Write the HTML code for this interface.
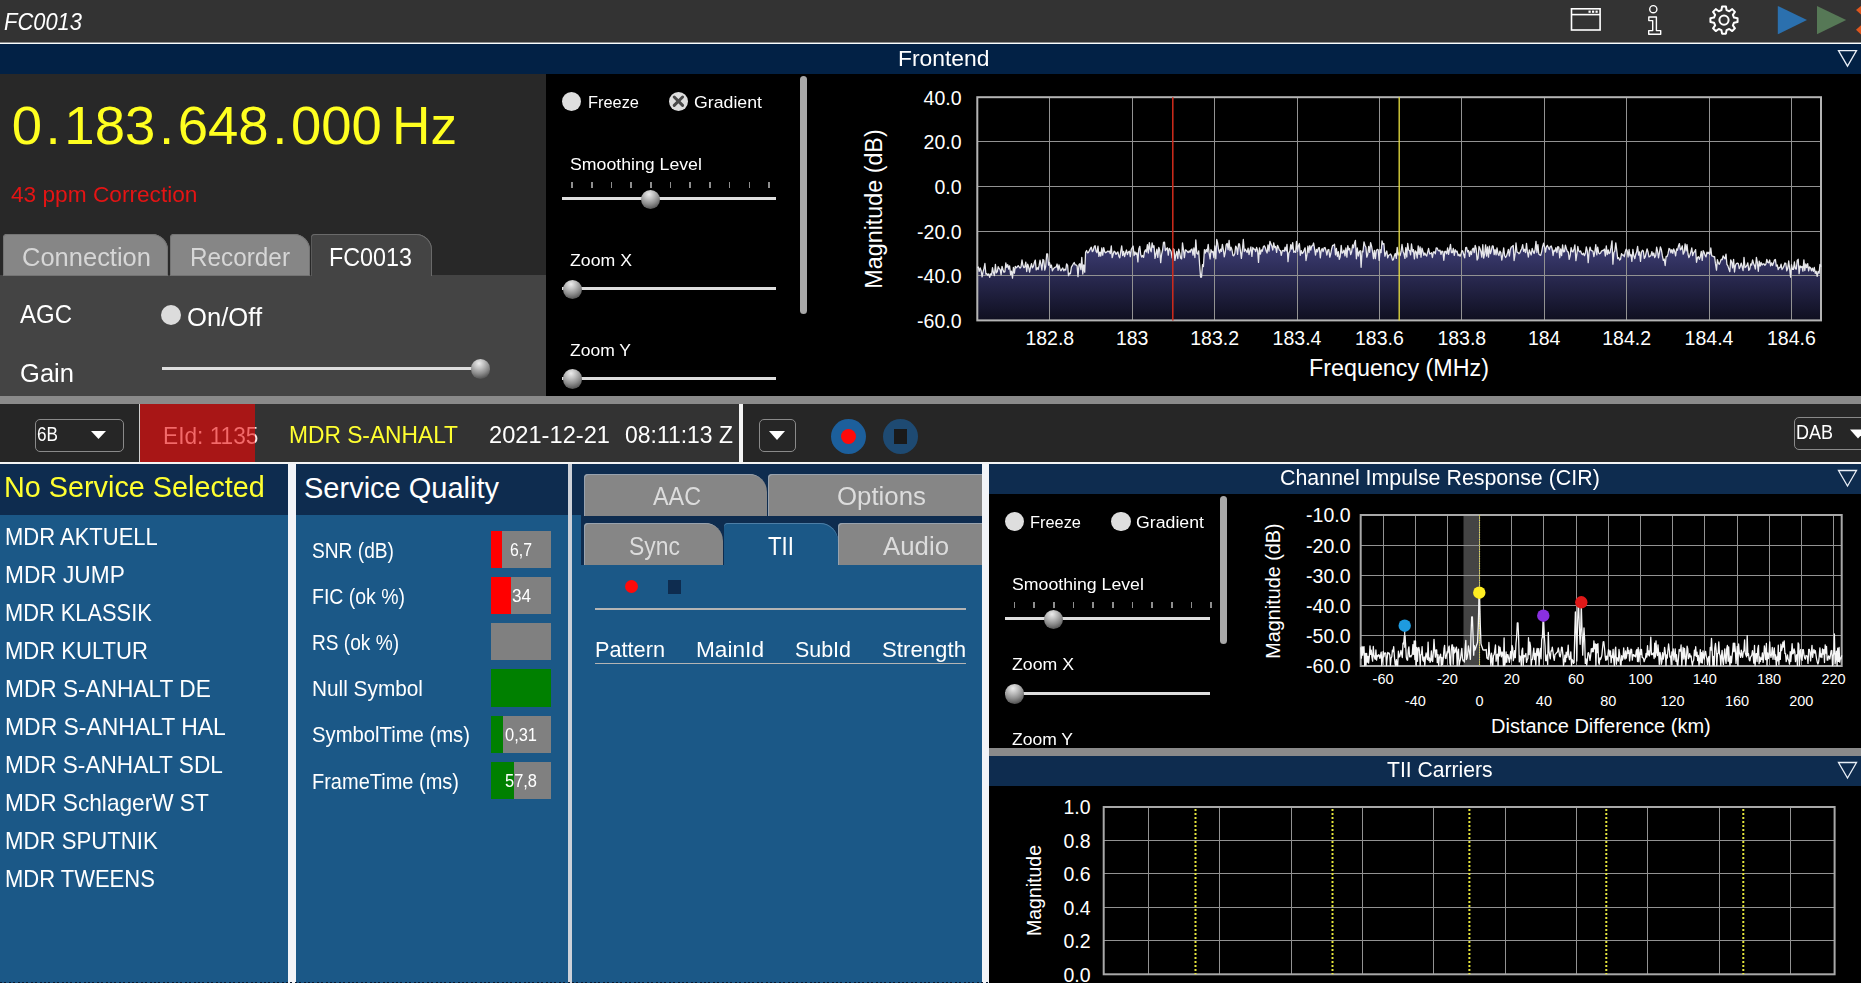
<!DOCTYPE html>
<html lang="en"><head><meta charset="utf-8"><title>FC0013</title>
<style>
html,body{margin:0;padding:0;background:#000;}
body{width:1861px;height:983px;position:relative;overflow:hidden;font-family:"Liberation Sans",sans-serif;}
.b{position:absolute;}
.t{position:absolute;white-space:nowrap;line-height:1;transform-origin:0 50%;}
.t i{font-style:normal;margin:0 3.6px;}
svg{position:absolute;left:0;top:0;overflow:visible;}
svg text{font-family:"Liberation Sans",sans-serif;fill:#fff;}
</style></head><body>
<div class="b" style="left:0px;top:0px;width:1861px;height:42px;background:#333333;"></div>
<div class="b" style="left:0px;top:42px;width:1861px;height:1px;background:#8e8e8e;"></div>
<div class="b" style="left:0px;top:43px;width:1861px;height:1px;background:#fafefe;"></div>
<span class="t" style="left:4.00px;top:11.13px;font-size:23px;color:#fff;transform:scaleX(0.9532);font-style:italic;">FC0013</span>
<svg width="1861" height="44" viewBox="0 0 1861 44" fill="none" stroke="#fff" stroke-width="1.6">
<rect x="1571.5" y="8.8" width="28.6" height="21.2"/>
<line x1="1571.5" y1="14.6" x2="1600" y2="14.6"/>
<g fill="#fff" stroke="none"><rect x="1588.5" y="10.6" width="2.2" height="2.2"/><rect x="1592" y="10.6" width="2.2" height="2.2"/><rect x="1595.5" y="10.6" width="2.2" height="2.2"/></g>
<circle cx="1653.3" cy="9.2" r="3.6" stroke-width="1.4"/>
<path d="M1648.8 17 h7.6 v13.6 h4.3 v3.6 h-12 v-3.6 h4.0 v-10 h-3.9 z" stroke-width="1.4" stroke-linejoin="round"/>
<g transform="translate(1724 20.1)">
<path id="gear" stroke-width="2" stroke-linejoin="round" d="M-2.56 -9.98 L-1.93 -13.56 L1.93 -13.56 L2.56 -9.98 L5.24 -8.87 L8.23 -10.96 L10.96 -8.23 L8.87 -5.24 L9.98 -2.56 L13.56 -1.93 L13.56 1.93 L9.98 2.56 L8.87 5.24 L10.96 8.23 L8.23 10.96 L5.24 8.87 L2.56 9.98 L1.93 13.56 L-1.93 13.56 L-2.56 9.98 L-5.24 8.87 L-8.23 10.96 L-10.96 8.23 L-8.87 5.24 L-9.98 2.56 L-13.56 1.93 L-13.56 -1.93 L-9.98 -2.56 L-8.87 -5.24 L-10.96 -8.23 L-8.23 -10.96 L-5.24 -8.87 Z"/>
<circle r="4.6" stroke-width="2"/>
</g>
<polygon points="1777.8,5.9 1807,20 1777.8,34.3" fill="#2b70ae" stroke="none"/>
<polygon points="1817,5.9 1846.2,20 1817,34.3" fill="#567856" stroke="none"/>
<polygon points="1856,10 1861,5.9 1861,14.6" fill="#de561e" stroke="none"/>
<polygon points="1856,29.8 1861,25.3 1861,34.4" fill="#de561e" stroke="none"/>
</svg>
<div class="b" style="left:0px;top:44px;width:1861px;height:30px;background:#022145;"></div>
<span class="t" style="left:897.75px;top:47.72px;font-size:22.3px;color:#fff;transform:scaleX(1.0251);">Frontend</span>
<svg width="1861" height="983"><polygon points="1838.5,50.6 1856.5,50.6 1847.5,66.1" fill="none" stroke="#e8eef6" stroke-width="1.3"/></svg>
<div class="b" style="left:0px;top:74px;width:546px;height:201px;background:#282828;"></div>
<div class="b" style="left:0px;top:275px;width:546px;height:121px;background:#444444;"></div>
<span class="t" style="left:11.70px;top:98.57px;font-size:54.5px;color:#ffff20;">0<i>.</i>183<i>.</i>648<i>.</i>000</span>
<span class="t" style="left:391.60px;top:99.41px;font-size:53.5px;color:#ffff20;transform:scaleX(0.9941);">Hz</span>
<span class="t" style="left:10.80px;top:184.67px;font-size:21.3px;color:#e41414;transform:scaleX(1.0644);">43 ppm Correction</span>
<div class="b" style="left:3px;top:234px;width:165px;height:41.5px;background:#868686;border-radius:4px 16px 0 0;box-shadow:inset 0 0 0 1px #747474;"></div>
<div class="b" style="left:170px;top:234px;width:140px;height:41.5px;background:#868686;border-radius:4px 16px 0 0;box-shadow:inset 0 0 0 1px #747474;"></div>
<div class="b" style="left:310.5px;top:234px;width:121px;height:42px;background:#444444;border-radius:4px 16px 0 0;box-shadow:inset 0 1px 0 #6a6a6a, inset -1px 0 0 #6a6a6a, inset 1px 0 0 #5a5a5a;"></div>
<span class="t" style="left:22.00px;top:245.28px;font-size:25.3px;color:#d6d6d6;transform:scaleX(1.0078);">Connection</span>
<span class="t" style="left:190.00px;top:245.28px;font-size:25.3px;color:#d6d6d6;transform:scaleX(0.9610);">Recorder</span>
<span class="t" style="left:329.00px;top:245.28px;font-size:25.3px;color:#fff;transform:scaleX(0.9221);">FC0013</span>
<span class="t" style="left:20.00px;top:301.14px;font-size:26.3px;color:#fff;transform:scaleX(0.9124);">AGC</span>
<div class="b" style="left:161px;top:305.3px;width:20px;height:20px;background:#dcdcdc;border-radius:50%;"></div>
<span class="t" style="left:186.50px;top:303.79px;font-size:26px;color:#fff;transform:scaleX(0.9855);">On/Off</span>
<span class="t" style="left:20.00px;top:359.84px;font-size:26.3px;color:#fff;transform:scaleX(0.9720);">Gain</span>
<div class="b" style="left:161.5px;top:366.8px;width:311.5px;height:3px;background:#dedede;"></div><div class="b" style="left:470.6px;top:359.3px;width:19.4px;height:19.4px;background:#999;border-radius:50%;background:radial-gradient(circle at 42% 22%,#ececec 0%,#bdbdbd 28%,#8c8c8c 55%,#555 80%,#3a3a3a 100%);"></div>
<div class="b" style="left:562.0px;top:91.60000000000001px;width:19.2px;height:19.2px;background:#dedede;border-radius:50%;"></div>
<span class="t" style="left:587.50px;top:94.34px;font-size:17.2px;color:#fff;transform:scaleX(0.9527);">Freeze</span>
<div class="b" style="left:668.8px;top:91.60000000000001px;width:19.2px;height:19.2px;background:#dedede;border-radius:50%;"></div><svg width="1861" height="983"><g stroke="#4a4a4a" stroke-width="3" stroke-linecap="round"><line x1="674.1999999999999" y1="97.0" x2="682.6" y2="105.4"/><line x1="682.6" y1="97.0" x2="674.1999999999999" y2="105.4"/></g></svg>
<span class="t" style="left:694.00px;top:94.34px;font-size:17.2px;color:#fff;transform:scaleX(1.0307);">Gradient</span>
<span class="t" style="left:569.50px;top:156.34px;font-size:17.2px;color:#fff;transform:scaleX(1.0302);">Smoothing Level</span>
<div class="b" style="left:571.2px;top:182px;width:1.7px;height:5.599999999999994px;background:#8e8e8e;"></div><div class="b" style="left:590.9px;top:182px;width:1.7px;height:5.599999999999994px;background:#8e8e8e;"></div><div class="b" style="left:610.6px;top:182px;width:1.7px;height:5.599999999999994px;background:#8e8e8e;"></div><div class="b" style="left:630.3px;top:182px;width:1.7px;height:5.599999999999994px;background:#8e8e8e;"></div><div class="b" style="left:650.0px;top:182px;width:1.7px;height:5.599999999999994px;background:#8e8e8e;"></div><div class="b" style="left:669.7px;top:182px;width:1.7px;height:5.599999999999994px;background:#8e8e8e;"></div><div class="b" style="left:689.4px;top:182px;width:1.7px;height:5.599999999999994px;background:#8e8e8e;"></div><div class="b" style="left:709.1px;top:182px;width:1.7px;height:5.599999999999994px;background:#8e8e8e;"></div><div class="b" style="left:728.8px;top:182px;width:1.7px;height:5.599999999999994px;background:#8e8e8e;"></div><div class="b" style="left:748.5px;top:182px;width:1.7px;height:5.599999999999994px;background:#8e8e8e;"></div><div class="b" style="left:768.2px;top:182px;width:1.7px;height:5.599999999999994px;background:#8e8e8e;"></div>
<div class="b" style="left:562px;top:197.1px;width:213.5px;height:3px;background:#dedede;"></div><div class="b" style="left:640.9px;top:189.6px;width:19.4px;height:19.4px;background:#999;border-radius:50%;background:radial-gradient(circle at 42% 22%,#ececec 0%,#bdbdbd 28%,#8c8c8c 55%,#555 80%,#3a3a3a 100%);"></div>
<span class="t" style="left:569.50px;top:252.24px;font-size:17.2px;color:#fff;transform:scaleX(1.0296);">Zoom X</span>
<div class="b" style="left:562px;top:287.1px;width:213.5px;height:3px;background:#dedede;"></div><div class="b" style="left:562.5px;top:279.6px;width:19.4px;height:19.4px;background:#999;border-radius:50%;background:radial-gradient(circle at 42% 22%,#ececec 0%,#bdbdbd 28%,#8c8c8c 55%,#555 80%,#3a3a3a 100%);"></div>
<span class="t" style="left:569.50px;top:342.24px;font-size:17.2px;color:#fff;transform:scaleX(1.0182);">Zoom Y</span>
<div class="b" style="left:562px;top:376.7px;width:213.5px;height:3px;background:#dedede;"></div><div class="b" style="left:562.5px;top:369.2px;width:19.4px;height:19.4px;background:#999;border-radius:50%;background:radial-gradient(circle at 42% 22%,#ececec 0%,#bdbdbd 28%,#8c8c8c 55%,#555 80%,#3a3a3a 100%);"></div>
<div class="b" style="left:800px;top:75.5px;width:7px;height:238px;background:#a8a8a8;border-radius:3.5px;"></div>
<div class="b" style="left:0px;top:396px;width:1861px;height:8px;background:#8a8a8a;"></div>
<div class="b" style="left:0px;top:404px;width:139px;height:58px;background:#262626;"></div>
<div class="b" style="left:139px;top:404px;width:1.2px;height:58px;background:#d0d0d0;"></div>
<div class="b" style="left:140px;top:404px;width:115px;height:58px;background:#a81616;"></div>
<div class="b" style="left:255px;top:404px;width:484px;height:58px;background:#333333;"></div>
<div class="b" style="left:738.5px;top:404px;width:4.5px;height:60px;background:#f4f4f4;"></div>
<div class="b" style="left:743px;top:404px;width:1118px;height:58px;background:#262626;"></div>
<div class="b" style="left:0px;top:462px;width:1861px;height:2px;background:#f4f4f4;"></div>
<div class="b" style="left:34.5px;top:419px;width:89px;height:33px;background:#262626;border:1.3px solid #8a8a8a;border-radius:5px;box-sizing:border-box;"></div>
<span class="t" style="left:37.00px;top:425.46px;font-size:19.3px;color:#fff;transform:scaleX(0.8895);">6B</span>
<svg width="1861" height="983"><polygon points="91,431 106,431 98.5,439" fill="#fff"/></svg>
<span class="t" style="left:163.30px;top:424.28px;font-size:24px;color:transparent;transform:scaleX(0.9458);background:linear-gradient(90deg,#f36a6a 0,#f36a6a 97.0px,#fbe4e4 97.0px);-webkit-background-clip:text;background-clip:text;">EId: 1135</span>
<span class="t" style="left:289.00px;top:423.08px;font-size:24px;color:#ffff30;transform:scaleX(0.9482);">MDR S-ANHALT</span>
<span class="t" style="left:488.50px;top:423.08px;font-size:24px;color:#fff;transform:scaleX(0.9856);">2021-12-21</span>
<span class="t" style="left:624.50px;top:423.08px;font-size:24px;color:#fff;transform:scaleX(0.9560);">08:11:13 Z</span>
<div class="b" style="left:758.5px;top:419px;width:37.5px;height:33px;background:#262626;border:1.3px solid #8a8a8a;border-radius:5px;box-sizing:border-box;"></div>
<svg width="1861" height="983"><polygon points="769,431 785,431 777.0,440" fill="#fff"/></svg>
<div class="b" style="left:830.5px;top:418.5px;width:35px;height:35px;background:#1c5f9c;border-radius:50%;"></div>
<div class="b" style="left:840.5px;top:428.5px;width:15px;height:15px;background:#ff0a0a;border-radius:50%;"></div>
<div class="b" style="left:882.5px;top:418.5px;width:35px;height:35px;background:#1e4a72;border-radius:50%;"></div>
<div class="b" style="left:894px;top:428.5px;width:12.5px;height:15px;background:#1a1a1a;"></div>
<div class="b" style="left:1793.5px;top:417px;width:80px;height:32.5px;background:#262626;border:1.3px solid #8a8a8a;border-radius:5px;box-sizing:border-box;"></div>
<span class="t" style="left:1796.00px;top:423.36px;font-size:19.3px;color:#fff;transform:scaleX(0.9323);">DAB</span>
<svg width="1861" height="983"><polygon points="1850,429.5 1866,429.5 1858.0,438.5" fill="#fff"/></svg>
<div class="b" style="left:0px;top:464px;width:288px;height:51px;background:#0e2c4f;"></div>
<div class="b" style="left:0px;top:515px;width:288px;height:468px;background:#1b5887;"></div>
<div class="b" style="left:288px;top:464px;width:8px;height:519px;background:#f2f4f8;"></div>
<span class="t" style="left:4.00px;top:472.78px;font-size:29.2px;color:#ffff30;transform:scaleX(0.9865);">No Service Selected</span>
<span class="t" style="left:4.60px;top:524.88px;font-size:24px;color:#fff;transform:scaleX(0.9165);">MDR AKTUELL</span>
<span class="t" style="left:4.60px;top:562.88px;font-size:24px;color:#fff;transform:scaleX(0.9458);">MDR JUMP</span>
<span class="t" style="left:4.60px;top:600.88px;font-size:24px;color:#fff;transform:scaleX(0.9096);">MDR KLASSIK</span>
<span class="t" style="left:4.60px;top:638.88px;font-size:24px;color:#fff;transform:scaleX(0.9180);">MDR KULTUR</span>
<span class="t" style="left:4.60px;top:676.88px;font-size:24px;color:#fff;transform:scaleX(0.9448);">MDR S-ANHALT DE</span>
<span class="t" style="left:4.60px;top:714.88px;font-size:24px;color:#fff;transform:scaleX(0.9552);">MDR S-ANHALT HAL</span>
<span class="t" style="left:4.60px;top:752.88px;font-size:24px;color:#fff;transform:scaleX(0.9422);">MDR S-ANHALT SDL</span>
<span class="t" style="left:4.60px;top:790.88px;font-size:24px;color:#fff;transform:scaleX(0.9433);">MDR SchlagerW ST</span>
<span class="t" style="left:4.60px;top:828.88px;font-size:24px;color:#fff;transform:scaleX(0.9241);">MDR SPUTNIK</span>
<span class="t" style="left:4.60px;top:866.88px;font-size:24px;color:#fff;transform:scaleX(0.9159);">MDR TWEENS</span>
<div class="b" style="left:296px;top:464px;width:272px;height:51px;background:#0e2c4f;"></div>
<div class="b" style="left:296px;top:515px;width:272px;height:468px;background:#1b5887;"></div>
<div class="b" style="left:568px;top:464px;width:4px;height:519px;background:#cdd1d8;"></div>
<span class="t" style="left:304.00px;top:474.25px;font-size:29px;color:#fff;">Service Quality</span>
<span class="t" style="left:311.50px;top:540.57px;font-size:21.3px;color:#fff;transform:scaleX(0.8998);">SNR (dB)</span>
<div class="b" style="left:491px;top:530.7px;width:60px;height:37.4px;background:#808080;"></div>
<div class="b" style="left:491px;top:530.7px;width:11px;height:37.4px;background:#ff0000;"></div>
<span class="t" style="left:510.00px;top:540.96px;font-size:18px;color:#fff;transform:scaleX(0.8792);">6,7</span>
<span class="t" style="left:311.50px;top:586.77px;font-size:21.3px;color:#fff;transform:scaleX(0.9138);">FIC (ok %)</span>
<div class="b" style="left:491px;top:576.9px;width:60px;height:37.4px;background:#808080;"></div>
<div class="b" style="left:491px;top:576.9px;width:20px;height:37.4px;background:#ff0000;"></div>
<span class="t" style="left:511.50px;top:587.16px;font-size:18px;color:#fff;transform:scaleX(0.9489);">34</span>
<span class="t" style="left:311.50px;top:632.97px;font-size:21.3px;color:#fff;transform:scaleX(0.8965);">RS (ok %)</span>
<div class="b" style="left:491px;top:623.1px;width:60px;height:37.4px;background:#808080;"></div>
<span class="t" style="left:311.50px;top:679.17px;font-size:21.3px;color:#fff;transform:scaleX(0.9768);">Null Symbol</span>
<div class="b" style="left:491px;top:669.3px;width:60px;height:37.4px;background:#808080;"></div>
<div class="b" style="left:491px;top:669.3px;width:60px;height:37.4px;background:#008000;"></div>
<span class="t" style="left:311.50px;top:725.37px;font-size:21.3px;color:#fff;transform:scaleX(0.9514);">SymbolTime (ms)</span>
<div class="b" style="left:491px;top:715.5px;width:60px;height:37.4px;background:#808080;"></div>
<div class="b" style="left:491px;top:715.5px;width:12px;height:37.4px;background:#008000;"></div>
<span class="t" style="left:505.00px;top:725.76px;font-size:18px;color:#fff;transform:scaleX(0.9134);">0,31</span>
<span class="t" style="left:311.50px;top:771.57px;font-size:21.3px;color:#fff;transform:scaleX(0.9388);">FrameTime (ms)</span>
<div class="b" style="left:491px;top:761.7px;width:60px;height:37.4px;background:#808080;"></div>
<div class="b" style="left:491px;top:761.7px;width:23px;height:37.4px;background:#008000;"></div>
<span class="t" style="left:505.00px;top:771.96px;font-size:18px;color:#fff;transform:scaleX(0.9134);">57,8</span>
<div class="b" style="left:572px;top:464px;width:410px;height:51px;background:#0e2c4f;"></div>
<div class="b" style="left:581px;top:515px;width:401px;height:50px;background:#0e2c4f;"></div>
<div class="b" style="left:572px;top:515px;width:9px;height:50px;background:#1b5887;"></div>
<div class="b" style="left:572px;top:565px;width:410px;height:418px;background:#1b5887;"></div>
<div class="b" style="left:982px;top:464px;width:7px;height:519px;background:#f2f4f8;"></div>
<div class="b" style="left:584px;top:474px;width:182.5px;height:41.5px;background:#868686;border-radius:4px 18px 0 0;box-shadow:inset 1px 1px 0 #98a2ae;"></div>
<div class="b" style="left:768px;top:474px;width:214px;height:41.5px;background:#868686;border-radius:4px 0px 0 0;box-shadow:inset 1px 1px 0 #98a2ae;"></div>
<div class="b" style="left:584px;top:523px;width:139px;height:42px;background:#868686;border-radius:4px 18px 0 0;box-shadow:inset 1px 1px 0 #98a2ae;"></div>
<div class="b" style="left:723.5px;top:523px;width:114px;height:42px;background:#1b5887;border-radius:4px 18px 0 0;box-shadow:inset 0 1px 0 #4d7ea6;"></div>
<div class="b" style="left:838px;top:523px;width:144px;height:42px;background:#868686;border-radius:4px 0px 0 0;box-shadow:inset 1px 1px 0 #98a2ae;"></div>
<span class="t" style="left:652.50px;top:484.08px;font-size:25.3px;color:#dcdcdc;transform:scaleX(0.9227);">AAC</span>
<span class="t" style="left:836.50px;top:484.08px;font-size:25.3px;color:#dcdcdc;transform:scaleX(1.0207);">Options</span>
<span class="t" style="left:628.50px;top:534.28px;font-size:25.3px;color:#dcdcdc;transform:scaleX(0.9067);">Sync</span>
<span class="t" style="left:768.00px;top:534.28px;font-size:25.3px;color:#fff;transform:scaleX(0.8810);">TII</span>
<span class="t" style="left:883.30px;top:534.28px;font-size:25.3px;color:#dcdcdc;transform:scaleX(1.0199);">Audio</span>
<div class="b" style="left:625px;top:580px;width:13.2px;height:13.2px;background:#ff0a0a;border-radius:50%;"></div>
<div class="b" style="left:668px;top:579.5px;width:13px;height:14px;background:#0e2c4f;"></div>
<div class="b" style="left:595px;top:608.3px;width:371px;height:1.5px;background:#b4b4b4;"></div>
<span class="t" style="left:595.00px;top:639.02px;font-size:22.3px;color:#fff;transform:scaleX(0.9736);">Pattern</span>
<span class="t" style="left:696.30px;top:639.02px;font-size:22.3px;color:#fff;transform:scaleX(1.0159);">MainId</span>
<span class="t" style="left:795.00px;top:639.02px;font-size:22.3px;color:#fff;transform:scaleX(0.9609);">SubId</span>
<span class="t" style="left:882.00px;top:639.02px;font-size:22.3px;color:#fff;transform:scaleX(0.9964);">Strength</span>
<div class="b" style="left:595px;top:662.6px;width:371px;height:1.4px;background:#b4b4b4;"></div>
<div class="b" style="left:989px;top:464px;width:872px;height:30px;background:#0e2c4f;"></div>
<span class="t" style="left:1280.00px;top:467.42px;font-size:22.3px;color:#fff;transform:scaleX(0.9592);">Channel Impulse Response (CIR)</span>
<svg width="1861" height="983"><polygon points="1838.5,470.5 1856.5,470.5 1847.5,486.0" fill="none" stroke="#e8eef6" stroke-width="1.3"/></svg>
<div class="b" style="left:989px;top:748px;width:872px;height:8px;background:#8a8a8a;"></div>
<div class="b" style="left:989px;top:756px;width:872px;height:30px;background:#0e2c4f;"></div>
<span class="t" style="left:1387.30px;top:759.42px;font-size:22.3px;color:#fff;transform:scaleX(0.9471);">TII Carriers</span>
<svg width="1861" height="983"><polygon points="1838.5,762.5 1856.5,762.5 1847.5,778.0" fill="none" stroke="#e8eef6" stroke-width="1.3"/></svg>
<div class="b" style="left:1004.9px;top:511.9px;width:19.2px;height:19.2px;background:#dedede;border-radius:50%;"></div>
<span class="t" style="left:1029.80px;top:514.14px;font-size:17.2px;color:#fff;transform:scaleX(0.9527);">Freeze</span>
<div class="b" style="left:1111.4px;top:511.9px;width:19.2px;height:19.2px;background:#dedede;border-radius:50%;"></div>
<span class="t" style="left:1136.30px;top:514.14px;font-size:17.2px;color:#fff;transform:scaleX(1.0307);">Gradient</span>
<span class="t" style="left:1011.70px;top:576.14px;font-size:17.2px;color:#fff;transform:scaleX(1.0302);">Smoothing Level</span>
<div class="b" style="left:1013.7px;top:602px;width:1.7px;height:5.7000000000000455px;background:#8e8e8e;"></div><div class="b" style="left:1033.4px;top:602px;width:1.7px;height:5.7000000000000455px;background:#8e8e8e;"></div><div class="b" style="left:1053.0px;top:602px;width:1.7px;height:5.7000000000000455px;background:#8e8e8e;"></div><div class="b" style="left:1072.7px;top:602px;width:1.7px;height:5.7000000000000455px;background:#8e8e8e;"></div><div class="b" style="left:1092.4px;top:602px;width:1.7px;height:5.7000000000000455px;background:#8e8e8e;"></div><div class="b" style="left:1112.0px;top:602px;width:1.7px;height:5.7000000000000455px;background:#8e8e8e;"></div><div class="b" style="left:1131.7px;top:602px;width:1.7px;height:5.7000000000000455px;background:#8e8e8e;"></div><div class="b" style="left:1151.4px;top:602px;width:1.7px;height:5.7000000000000455px;background:#8e8e8e;"></div><div class="b" style="left:1171.1px;top:602px;width:1.7px;height:5.7000000000000455px;background:#8e8e8e;"></div><div class="b" style="left:1190.7px;top:602px;width:1.7px;height:5.7000000000000455px;background:#8e8e8e;"></div><div class="b" style="left:1210.4px;top:602px;width:1.7px;height:5.7000000000000455px;background:#8e8e8e;"></div>
<div class="b" style="left:1004.6px;top:617.1px;width:205.89999999999998px;height:3px;background:#dedede;"></div><div class="b" style="left:1043.7px;top:609.6px;width:19.4px;height:19.4px;background:#999;border-radius:50%;background:radial-gradient(circle at 42% 22%,#ececec 0%,#bdbdbd 28%,#8c8c8c 55%,#555 80%,#3a3a3a 100%);"></div>
<span class="t" style="left:1011.70px;top:655.94px;font-size:17.2px;color:#fff;transform:scaleX(1.0296);">Zoom X</span>
<div class="b" style="left:1004.6px;top:691.9px;width:205.89999999999998px;height:3px;background:#dedede;"></div><div class="b" style="left:1004.5999999999999px;top:684.4px;width:19.4px;height:19.4px;background:#999;border-radius:50%;background:radial-gradient(circle at 42% 22%,#ececec 0%,#bdbdbd 28%,#8c8c8c 55%,#555 80%,#3a3a3a 100%);"></div>
<div class="b" style="left:989px;top:494px;width:300px;height:254px;overflow:hidden;"><span class="t" style="left:22.70px;top:236.94px;font-size:17.2px;color:#fff;transform:scaleX(1.0182);">Zoom Y</span></div>
<div class="b" style="left:1220px;top:495.5px;width:7px;height:148.5px;background:#a8a8a8;border-radius:3.5px;"></div>
<div class="b" style="left:0px;top:982px;width:989px;height:1px;background:transparent;background:repeating-linear-gradient(90deg,#0a1a30 0 2px,transparent 2px 4.4px);"></div>
<svg width="1861" height="983" viewBox="0 0 1861 983">
<defs><linearGradient id="fg" x1="0" y1="0" x2="0" y2="1"><stop offset="0" stop-color="#40407a"/><stop offset="1" stop-color="#0f0f20"/></linearGradient></defs>
<polygon points="977.3,320.4 977.3,267.7 978.3,267.0 979.2,271.3 980.2,267.9 981.1,270.5 982.1,276.9 983.0,272.2 984.0,268.3 984.9,263.5 985.9,274.2 986.8,273.7 987.8,275.3 988.7,273.9 989.7,277.4 990.6,273.8 991.6,274.8 992.5,267.7 993.5,272.9 994.4,275.6 995.4,264.3 996.3,272.9 997.3,271.6 998.2,266.7 999.2,268.6 1000.1,269.4 1001.1,274.7 1002.0,266.3 1003.0,269.8 1003.9,272.2 1004.9,271.8 1005.8,263.0 1006.8,267.4 1007.7,264.6 1008.7,269.0 1009.6,265.8 1010.6,274.7 1011.5,271.2 1012.5,278.1 1013.4,267.3 1014.4,273.2 1015.3,266.3 1016.3,267.8 1017.2,267.0 1018.2,265.6 1019.1,266.8 1020.1,268.1 1021.0,266.8 1022.0,260.0 1022.9,265.3 1023.9,267.7 1024.8,267.0 1025.8,262.1 1026.7,271.5 1027.7,264.1 1028.6,266.8 1029.6,272.2 1030.5,267.3 1031.5,263.7 1032.4,267.8 1033.4,266.3 1034.3,262.8 1035.3,260.1 1036.2,269.9 1037.2,267.7 1038.1,269.5 1039.1,265.7 1040.0,260.1 1041.0,264.7 1041.9,270.0 1042.9,259.5 1043.8,260.2 1044.8,270.2 1045.7,266.5 1046.7,253.9 1047.6,253.9 1048.6,265.2 1049.5,262.7 1050.5,267.4 1051.4,265.1 1052.4,270.8 1053.3,269.0 1054.3,267.8 1055.2,267.2 1056.2,267.1 1057.1,264.0 1058.1,270.4 1059.0,265.0 1060.0,269.2 1060.9,270.8 1061.9,269.1 1062.8,267.9 1063.8,270.9 1064.7,269.3 1065.7,270.1 1066.6,263.8 1067.6,265.4 1068.5,275.7 1069.5,273.2 1070.4,273.7 1071.4,267.2 1072.3,265.7 1073.3,263.8 1074.2,262.5 1075.2,264.9 1076.1,264.9 1077.1,265.9 1078.0,276.6 1079.0,264.6 1079.9,263.8 1080.9,269.6 1081.8,257.3 1082.8,274.0 1083.7,265.0 1084.7,272.2 1085.6,252.3 1086.6,250.5 1087.5,252.8 1088.5,252.3 1089.4,250.6 1090.4,248.6 1091.3,247.2 1092.3,251.5 1093.2,250.7 1094.2,246.7 1095.1,245.7 1096.1,251.4 1097.0,252.7 1098.0,246.2 1098.9,256.4 1099.9,252.1 1100.8,256.0 1101.8,247.8 1102.7,255.1 1103.7,247.7 1104.6,251.5 1105.6,252.8 1106.5,252.3 1107.5,251.1 1108.4,251.6 1109.4,251.1 1110.3,253.7 1111.3,245.8 1112.2,257.6 1113.2,254.0 1114.1,251.2 1115.1,252.1 1116.0,254.4 1117.0,252.8 1117.9,252.0 1118.9,256.4 1119.8,257.8 1120.8,251.1 1121.7,245.9 1122.7,255.7 1123.6,251.5 1124.6,256.6 1125.5,253.0 1126.5,250.0 1127.4,254.6 1128.4,252.0 1129.3,251.2 1130.3,256.6 1131.2,249.6 1132.2,247.8 1133.1,246.1 1134.1,255.7 1135.0,252.0 1136.0,254.4 1136.9,252.8 1137.9,261.9 1138.8,249.0 1139.8,246.3 1140.7,254.5 1141.7,257.1 1142.6,255.5 1143.6,257.4 1144.5,251.8 1145.5,249.9 1146.4,252.0 1147.4,244.6 1148.3,253.0 1149.3,242.7 1150.2,249.2 1151.2,251.8 1152.1,242.8 1153.1,247.4 1154.0,245.7 1155.0,258.4 1155.9,254.1 1156.9,249.2 1157.8,257.4 1158.8,247.4 1159.7,250.2 1160.7,262.6 1161.6,254.3 1162.6,250.0 1163.5,242.4 1164.5,242.1 1165.4,250.7 1166.4,249.0 1167.3,247.8 1168.3,255.1 1169.2,248.4 1170.2,249.9 1171.1,251.5 1172.1,257.9 1173.0,248.6 1174.0,249.4 1174.9,260.4 1175.9,255.0 1176.8,251.5 1177.8,258.5 1178.7,249.1 1179.7,252.8 1180.6,258.0 1181.6,258.9 1182.5,242.8 1183.5,250.2 1184.4,257.6 1185.4,249.8 1186.3,250.3 1187.3,251.5 1188.2,252.6 1189.2,250.9 1190.1,252.3 1191.1,249.5 1192.0,249.0 1193.0,255.1 1193.9,248.0 1194.9,257.5 1195.8,239.8 1196.8,253.3 1197.7,254.1 1198.7,250.9 1199.6,264.6 1200.6,277.1 1201.5,277.1 1202.5,264.6 1203.4,266.6 1204.4,249.7 1205.3,253.0 1206.3,249.4 1207.2,251.8 1208.2,244.3 1209.1,252.9 1210.1,258.9 1211.0,249.7 1212.0,252.2 1212.9,251.5 1213.9,257.6 1214.8,245.9 1215.8,258.8 1216.7,239.5 1217.7,243.5 1218.6,250.0 1219.6,252.8 1220.5,249.1 1221.5,251.4 1222.4,244.3 1223.4,250.0 1224.3,256.9 1225.3,252.0 1226.2,244.7 1227.2,243.4 1228.1,249.7 1229.1,240.3 1230.0,250.7 1231.0,247.2 1231.9,249.5 1232.9,255.4 1233.8,255.8 1234.8,253.5 1235.7,246.1 1236.7,247.9 1237.6,254.3 1238.6,243.8 1239.5,244.0 1240.5,251.5 1241.4,258.3 1242.4,249.7 1243.3,239.5 1244.3,251.5 1245.2,249.2 1246.2,250.8 1247.1,252.5 1248.1,248.1 1249.0,254.5 1250.0,250.2 1250.9,247.0 1251.9,256.4 1252.8,247.5 1253.8,249.2 1254.7,249.1 1255.7,251.6 1256.6,247.5 1257.6,250.5 1258.5,262.4 1259.5,247.8 1260.4,254.1 1261.4,249.8 1262.3,251.2 1263.3,247.0 1264.2,245.8 1265.2,247.3 1266.1,250.7 1267.1,253.0 1268.0,244.9 1269.0,251.1 1269.9,241.3 1270.9,244.1 1271.8,246.1 1272.8,250.0 1273.7,242.8 1274.7,247.7 1275.6,246.5 1276.6,252.3 1277.5,245.3 1278.5,247.5 1279.4,250.1 1280.4,250.6 1281.3,255.3 1282.3,250.6 1283.2,250.4 1284.2,251.3 1285.1,247.1 1286.1,250.8 1287.0,244.4 1288.0,261.6 1288.9,253.0 1289.9,251.1 1290.8,244.7 1291.8,249.1 1292.7,242.6 1293.7,252.3 1294.6,251.3 1295.6,252.4 1296.5,241.4 1297.5,251.3 1298.4,245.9 1299.4,243.5 1300.3,255.3 1301.3,250.6 1302.2,253.5 1303.2,252.6 1304.1,250.1 1305.1,247.8 1306.0,260.5 1307.0,254.8 1307.9,246.1 1308.9,252.6 1309.8,245.6 1310.8,250.1 1311.7,246.0 1312.7,245.6 1313.6,243.0 1314.6,248.8 1315.5,255.1 1316.5,249.3 1317.4,251.9 1318.4,248.1 1319.3,247.6 1320.3,257.8 1321.2,250.5 1322.2,248.5 1323.1,251.7 1324.1,247.9 1325.0,247.5 1326.0,250.7 1326.9,255.0 1327.9,249.8 1328.8,249.5 1329.8,257.2 1330.7,254.0 1331.7,248.7 1332.6,245.5 1333.6,245.3 1334.5,244.2 1335.5,254.9 1336.4,248.5 1337.4,256.5 1338.3,251.7 1339.3,259.3 1340.2,256.8 1341.2,245.4 1342.1,253.2 1343.1,252.2 1344.0,250.1 1345.0,255.8 1345.9,248.0 1346.9,257.1 1347.8,245.7 1348.8,249.8 1349.7,248.4 1350.7,254.6 1351.6,252.1 1352.6,244.8 1353.5,247.9 1354.5,243.1 1355.4,240.4 1356.4,258.8 1357.3,248.0 1358.3,256.0 1359.2,252.2 1360.2,250.6 1361.1,267.3 1362.1,251.2 1363.0,251.8 1364.0,241.8 1364.9,245.2 1365.9,247.2 1366.8,257.2 1367.8,254.0 1368.7,246.4 1369.7,252.3 1370.6,242.6 1371.6,246.3 1372.5,251.5 1373.5,258.7 1374.4,250.4 1375.4,258.7 1376.3,250.6 1377.3,249.4 1378.2,249.8 1379.2,260.4 1380.1,249.6 1381.1,252.7 1382.0,241.0 1383.0,244.2 1383.9,243.6 1384.9,256.2 1385.8,253.3 1386.8,251.0 1387.7,257.8 1388.7,255.3 1389.6,254.7 1390.6,254.0 1391.5,255.9 1392.5,260.2 1393.4,259.7 1394.4,255.7 1395.3,253.5 1396.3,258.4 1397.2,247.3 1398.2,255.0 1399.2,252.8 1400.1,255.6 1401.1,251.5 1402.0,244.5 1403.0,251.2 1403.9,253.5 1404.9,258.4 1405.8,247.6 1406.8,257.0 1407.7,243.4 1408.7,250.2 1409.6,250.5 1410.6,254.8 1411.5,244.0 1412.5,251.7 1413.4,249.6 1414.4,258.9 1415.3,250.8 1416.3,252.2 1417.2,258.0 1418.2,245.9 1419.1,254.3 1420.1,246.8 1421.0,257.2 1422.0,248.1 1422.9,251.2 1423.9,255.3 1424.8,252.9 1425.8,255.1 1426.7,256.0 1427.7,251.8 1428.6,248.5 1429.6,253.8 1430.5,253.6 1431.5,252.6 1432.4,257.5 1433.4,252.0 1434.3,251.9 1435.3,253.8 1436.2,247.9 1437.2,248.1 1438.1,250.2 1439.1,250.9 1440.0,250.1 1441.0,254.4 1441.9,251.2 1442.9,251.7 1443.8,260.3 1444.8,251.3 1445.7,251.4 1446.7,253.8 1447.6,247.9 1448.6,254.3 1449.5,249.4 1450.5,244.4 1451.4,252.5 1452.4,252.5 1453.3,248.5 1454.3,255.4 1455.2,249.7 1456.2,251.9 1457.1,251.1 1458.1,255.7 1459.0,254.3 1460.0,256.3 1460.9,254.4 1461.9,250.6 1462.8,251.3 1463.8,254.8 1464.7,257.9 1465.7,247.6 1466.6,247.4 1467.6,251.9 1468.5,250.5 1469.5,256.4 1470.4,251.1 1471.4,254.7 1472.3,249.5 1473.3,248.2 1474.2,252.7 1475.2,245.4 1476.1,248.5 1477.1,260.0 1478.0,258.1 1479.0,246.5 1479.9,248.4 1480.9,251.7 1481.8,257.1 1482.8,244.7 1483.7,258.2 1484.7,253.4 1485.6,244.8 1486.6,256.0 1487.5,247.0 1488.5,257.1 1489.4,246.2 1490.4,253.7 1491.3,250.7 1492.3,245.8 1493.2,246.1 1494.2,254.7 1495.1,249.7 1496.1,254.8 1497.0,247.8 1498.0,253.7 1498.9,255.5 1499.9,251.2 1500.8,252.7 1501.8,260.2 1502.7,255.0 1503.7,247.9 1504.6,255.5 1505.6,257.5 1506.5,256.0 1507.5,252.9 1508.4,249.5 1509.4,256.0 1510.3,249.6 1511.3,246.9 1512.2,246.7 1513.2,245.4 1514.1,260.5 1515.1,253.8 1516.0,243.0 1517.0,252.1 1517.9,252.3 1518.9,253.7 1519.8,252.9 1520.8,250.4 1521.7,248.7 1522.7,244.7 1523.6,251.3 1524.6,249.3 1525.5,252.7 1526.5,243.4 1527.4,251.9 1528.4,257.0 1529.3,250.0 1530.3,252.6 1531.2,255.0 1532.2,248.4 1533.1,251.4 1534.1,253.5 1535.0,250.2 1536.0,241.4 1536.9,252.5 1537.9,244.6 1538.8,254.0 1539.8,254.9 1540.7,255.3 1541.7,251.6 1542.6,246.7 1543.6,243.2 1544.5,246.7 1545.5,252.1 1546.4,246.9 1547.4,245.4 1548.3,247.4 1549.3,249.6 1550.2,246.7 1551.2,245.9 1552.1,248.7 1553.1,255.5 1554.0,250.1 1555.0,251.2 1555.9,247.6 1556.9,252.7 1557.8,246.6 1558.8,247.0 1559.7,257.8 1560.7,249.0 1561.6,255.7 1562.6,244.8 1563.5,251.9 1564.5,251.7 1565.4,245.1 1566.4,248.7 1567.3,251.4 1568.3,252.1 1569.2,259.3 1570.2,255.7 1571.1,247.6 1572.1,251.4 1573.0,251.9 1574.0,249.0 1574.9,244.9 1575.9,260.6 1576.8,254.8 1577.8,246.5 1578.7,250.8 1579.7,251.9 1580.6,250.9 1581.6,253.8 1582.5,254.6 1583.5,253.2 1584.4,255.7 1585.4,253.3 1586.3,246.9 1587.3,250.9 1588.2,262.6 1589.2,251.6 1590.1,247.1 1591.1,250.7 1592.0,250.7 1593.0,251.4 1593.9,256.6 1594.9,251.6 1595.8,244.7 1596.8,254.8 1597.7,247.2 1598.7,253.0 1599.6,253.8 1600.6,253.0 1601.5,251.1 1602.5,250.5 1603.4,250.5 1604.4,249.1 1605.3,256.0 1606.3,245.8 1607.2,254.6 1608.2,250.0 1609.1,253.7 1610.1,252.5 1611.0,247.4 1612.0,240.8 1612.9,264.2 1613.9,252.5 1614.8,251.2 1615.8,242.8 1616.7,249.9 1617.7,258.6 1618.6,257.6 1619.6,260.1 1620.5,259.3 1621.5,253.6 1622.4,255.1 1623.4,255.0 1624.3,256.7 1625.3,251.7 1626.2,249.1 1627.2,250.9 1628.1,257.0 1629.1,249.5 1630.0,255.9 1631.0,254.7 1631.9,261.3 1632.9,249.5 1633.8,255.6 1634.8,258.7 1635.7,254.5 1636.7,251.6 1637.6,246.4 1638.6,255.1 1639.5,251.9 1640.5,261.4 1641.4,252.2 1642.4,250.2 1643.3,250.9 1644.3,258.3 1645.2,257.0 1646.2,252.5 1647.1,248.9 1648.1,252.3 1649.0,256.9 1650.0,256.4 1650.9,255.5 1651.9,251.6 1652.8,255.6 1653.8,253.0 1654.7,257.5 1655.7,255.7 1656.6,247.2 1657.6,251.4 1658.5,257.8 1659.5,252.3 1660.4,246.9 1661.4,249.8 1662.3,255.4 1663.3,260.3 1664.2,259.1 1665.2,265.5 1666.1,256.5 1667.1,256.6 1668.0,253.9 1669.0,248.5 1669.9,249.0 1670.9,252.8 1671.8,249.7 1672.8,253.4 1673.7,248.9 1674.7,251.6 1675.6,255.9 1676.6,249.0 1677.5,250.2 1678.5,245.8 1679.4,243.6 1680.4,249.8 1681.3,249.0 1682.3,245.8 1683.2,254.2 1684.2,252.3 1685.1,243.9 1686.1,250.9 1687.0,244.6 1688.0,254.0 1688.9,257.6 1689.9,255.3 1690.8,252.1 1691.8,248.0 1692.7,255.6 1693.7,252.5 1694.6,251.7 1695.6,249.6 1696.5,262.3 1697.5,257.6 1698.4,256.8 1699.4,259.3 1700.3,256.7 1701.3,251.4 1702.2,260.4 1703.2,250.7 1704.1,252.4 1705.1,255.4 1706.0,256.9 1707.0,252.1 1707.9,253.5 1708.9,252.3 1709.8,254.4 1710.8,248.0 1711.7,255.8 1712.7,256.1 1713.6,256.8 1714.6,256.7 1715.5,263.9 1716.5,270.1 1717.4,259.6 1718.4,263.1 1719.3,264.3 1720.3,261.8 1721.2,259.3 1722.2,259.7 1723.1,255.8 1724.1,257.8 1725.0,258.8 1726.0,254.1 1726.9,264.4 1727.9,265.9 1728.8,268.9 1729.8,271.7 1730.7,259.9 1731.7,262.0 1732.6,267.8 1733.6,259.4 1734.5,272.0 1735.5,265.2 1736.4,263.5 1737.4,263.1 1738.3,263.6 1739.3,268.5 1740.2,266.7 1741.2,263.1 1742.1,266.7 1743.1,270.5 1744.0,257.3 1745.0,267.6 1745.9,266.9 1746.9,265.4 1747.8,262.8 1748.8,270.3 1749.7,269.4 1750.7,264.0 1751.6,265.0 1752.6,260.0 1753.5,263.2 1754.5,265.7 1755.4,269.0 1756.4,257.3 1757.3,262.1 1758.3,271.3 1759.2,261.2 1760.2,266.2 1761.1,262.4 1762.1,265.0 1763.0,264.0 1764.0,263.8 1764.9,265.3 1765.9,264.1 1766.8,259.4 1767.8,262.5 1768.7,262.8 1769.7,260.0 1770.6,265.8 1771.6,262.8 1772.5,265.5 1773.5,263.1 1774.4,260.1 1775.4,259.5 1776.3,266.2 1777.3,265.0 1778.2,269.5 1779.2,267.6 1780.1,267.5 1781.1,264.2 1782.0,269.5 1783.0,268.0 1783.9,266.1 1784.9,263.0 1785.8,263.4 1786.8,270.8 1787.7,268.4 1788.7,261.0 1789.6,268.8 1790.6,277.2 1791.5,264.7 1792.5,269.4 1793.4,269.3 1794.4,262.0 1795.3,268.7 1796.3,269.1 1797.2,260.5 1798.2,259.3 1799.1,273.7 1800.1,265.9 1801.0,267.4 1802.0,266.4 1802.9,271.1 1803.9,259.9 1804.8,270.5 1805.8,264.0 1806.7,267.5 1807.7,263.6 1808.6,270.9 1809.6,267.0 1810.5,267.7 1811.5,270.8 1812.4,268.2 1813.4,271.3 1814.3,267.5 1815.3,273.3 1816.2,271.3 1817.2,276.3 1818.1,271.5 1819.1,273.3 1820.0,264.3 1821.0,266.8 1821.0,320.4" fill="url(#fg)"/>
<line x1="977.3" x2="1821.0" y1="97.2" y2="97.2" stroke="#929292" stroke-width="1" shape-rendering="crispEdges"/>
<line x1="977.3" x2="1821.0" y1="141.8" y2="141.8" stroke="#929292" stroke-width="1" shape-rendering="crispEdges"/>
<line x1="977.3" x2="1821.0" y1="186.5" y2="186.5" stroke="#929292" stroke-width="1" shape-rendering="crispEdges"/>
<line x1="977.3" x2="1821.0" y1="231.1" y2="231.1" stroke="#929292" stroke-width="1" shape-rendering="crispEdges"/>
<line x1="977.3" x2="1821.0" y1="275.8" y2="275.8" stroke="#929292" stroke-width="1" shape-rendering="crispEdges"/>
<line x1="977.3" x2="1821.0" y1="320.4" y2="320.4" stroke="#929292" stroke-width="1" shape-rendering="crispEdges"/>
<line x1="1049.8" x2="1049.8" y1="97.2" y2="320.4" stroke="#929292" stroke-width="1" shape-rendering="crispEdges"/>
<line x1="1132.2" x2="1132.2" y1="97.2" y2="320.4" stroke="#929292" stroke-width="1" shape-rendering="crispEdges"/>
<line x1="1214.6" x2="1214.6" y1="97.2" y2="320.4" stroke="#929292" stroke-width="1" shape-rendering="crispEdges"/>
<line x1="1297.0" x2="1297.0" y1="97.2" y2="320.4" stroke="#929292" stroke-width="1" shape-rendering="crispEdges"/>
<line x1="1379.4" x2="1379.4" y1="97.2" y2="320.4" stroke="#929292" stroke-width="1" shape-rendering="crispEdges"/>
<line x1="1461.8" x2="1461.8" y1="97.2" y2="320.4" stroke="#929292" stroke-width="1" shape-rendering="crispEdges"/>
<line x1="1544.2" x2="1544.2" y1="97.2" y2="320.4" stroke="#929292" stroke-width="1" shape-rendering="crispEdges"/>
<line x1="1626.6" x2="1626.6" y1="97.2" y2="320.4" stroke="#929292" stroke-width="1" shape-rendering="crispEdges"/>
<line x1="1709.0" x2="1709.0" y1="97.2" y2="320.4" stroke="#929292" stroke-width="1" shape-rendering="crispEdges"/>
<line x1="1791.4" x2="1791.4" y1="97.2" y2="320.4" stroke="#929292" stroke-width="1" shape-rendering="crispEdges"/>
<rect x="977.3" y="97.2" width="843.7" height="223.2" fill="none" stroke="#b4b4b4" stroke-width="2"/>
<polyline points="977.3,267.7 978.3,267.0 979.2,271.3 980.2,267.9 981.1,270.5 982.1,276.9 983.0,272.2 984.0,268.3 984.9,263.5 985.9,274.2 986.8,273.7 987.8,275.3 988.7,273.9 989.7,277.4 990.6,273.8 991.6,274.8 992.5,267.7 993.5,272.9 994.4,275.6 995.4,264.3 996.3,272.9 997.3,271.6 998.2,266.7 999.2,268.6 1000.1,269.4 1001.1,274.7 1002.0,266.3 1003.0,269.8 1003.9,272.2 1004.9,271.8 1005.8,263.0 1006.8,267.4 1007.7,264.6 1008.7,269.0 1009.6,265.8 1010.6,274.7 1011.5,271.2 1012.5,278.1 1013.4,267.3 1014.4,273.2 1015.3,266.3 1016.3,267.8 1017.2,267.0 1018.2,265.6 1019.1,266.8 1020.1,268.1 1021.0,266.8 1022.0,260.0 1022.9,265.3 1023.9,267.7 1024.8,267.0 1025.8,262.1 1026.7,271.5 1027.7,264.1 1028.6,266.8 1029.6,272.2 1030.5,267.3 1031.5,263.7 1032.4,267.8 1033.4,266.3 1034.3,262.8 1035.3,260.1 1036.2,269.9 1037.2,267.7 1038.1,269.5 1039.1,265.7 1040.0,260.1 1041.0,264.7 1041.9,270.0 1042.9,259.5 1043.8,260.2 1044.8,270.2 1045.7,266.5 1046.7,253.9 1047.6,253.9 1048.6,265.2 1049.5,262.7 1050.5,267.4 1051.4,265.1 1052.4,270.8 1053.3,269.0 1054.3,267.8 1055.2,267.2 1056.2,267.1 1057.1,264.0 1058.1,270.4 1059.0,265.0 1060.0,269.2 1060.9,270.8 1061.9,269.1 1062.8,267.9 1063.8,270.9 1064.7,269.3 1065.7,270.1 1066.6,263.8 1067.6,265.4 1068.5,275.7 1069.5,273.2 1070.4,273.7 1071.4,267.2 1072.3,265.7 1073.3,263.8 1074.2,262.5 1075.2,264.9 1076.1,264.9 1077.1,265.9 1078.0,276.6 1079.0,264.6 1079.9,263.8 1080.9,269.6 1081.8,257.3 1082.8,274.0 1083.7,265.0 1084.7,272.2 1085.6,252.3 1086.6,250.5 1087.5,252.8 1088.5,252.3 1089.4,250.6 1090.4,248.6 1091.3,247.2 1092.3,251.5 1093.2,250.7 1094.2,246.7 1095.1,245.7 1096.1,251.4 1097.0,252.7 1098.0,246.2 1098.9,256.4 1099.9,252.1 1100.8,256.0 1101.8,247.8 1102.7,255.1 1103.7,247.7 1104.6,251.5 1105.6,252.8 1106.5,252.3 1107.5,251.1 1108.4,251.6 1109.4,251.1 1110.3,253.7 1111.3,245.8 1112.2,257.6 1113.2,254.0 1114.1,251.2 1115.1,252.1 1116.0,254.4 1117.0,252.8 1117.9,252.0 1118.9,256.4 1119.8,257.8 1120.8,251.1 1121.7,245.9 1122.7,255.7 1123.6,251.5 1124.6,256.6 1125.5,253.0 1126.5,250.0 1127.4,254.6 1128.4,252.0 1129.3,251.2 1130.3,256.6 1131.2,249.6 1132.2,247.8 1133.1,246.1 1134.1,255.7 1135.0,252.0 1136.0,254.4 1136.9,252.8 1137.9,261.9 1138.8,249.0 1139.8,246.3 1140.7,254.5 1141.7,257.1 1142.6,255.5 1143.6,257.4 1144.5,251.8 1145.5,249.9 1146.4,252.0 1147.4,244.6 1148.3,253.0 1149.3,242.7 1150.2,249.2 1151.2,251.8 1152.1,242.8 1153.1,247.4 1154.0,245.7 1155.0,258.4 1155.9,254.1 1156.9,249.2 1157.8,257.4 1158.8,247.4 1159.7,250.2 1160.7,262.6 1161.6,254.3 1162.6,250.0 1163.5,242.4 1164.5,242.1 1165.4,250.7 1166.4,249.0 1167.3,247.8 1168.3,255.1 1169.2,248.4 1170.2,249.9 1171.1,251.5 1172.1,257.9 1173.0,248.6 1174.0,249.4 1174.9,260.4 1175.9,255.0 1176.8,251.5 1177.8,258.5 1178.7,249.1 1179.7,252.8 1180.6,258.0 1181.6,258.9 1182.5,242.8 1183.5,250.2 1184.4,257.6 1185.4,249.8 1186.3,250.3 1187.3,251.5 1188.2,252.6 1189.2,250.9 1190.1,252.3 1191.1,249.5 1192.0,249.0 1193.0,255.1 1193.9,248.0 1194.9,257.5 1195.8,239.8 1196.8,253.3 1197.7,254.1 1198.7,250.9 1199.6,264.6 1200.6,277.1 1201.5,277.1 1202.5,264.6 1203.4,266.6 1204.4,249.7 1205.3,253.0 1206.3,249.4 1207.2,251.8 1208.2,244.3 1209.1,252.9 1210.1,258.9 1211.0,249.7 1212.0,252.2 1212.9,251.5 1213.9,257.6 1214.8,245.9 1215.8,258.8 1216.7,239.5 1217.7,243.5 1218.6,250.0 1219.6,252.8 1220.5,249.1 1221.5,251.4 1222.4,244.3 1223.4,250.0 1224.3,256.9 1225.3,252.0 1226.2,244.7 1227.2,243.4 1228.1,249.7 1229.1,240.3 1230.0,250.7 1231.0,247.2 1231.9,249.5 1232.9,255.4 1233.8,255.8 1234.8,253.5 1235.7,246.1 1236.7,247.9 1237.6,254.3 1238.6,243.8 1239.5,244.0 1240.5,251.5 1241.4,258.3 1242.4,249.7 1243.3,239.5 1244.3,251.5 1245.2,249.2 1246.2,250.8 1247.1,252.5 1248.1,248.1 1249.0,254.5 1250.0,250.2 1250.9,247.0 1251.9,256.4 1252.8,247.5 1253.8,249.2 1254.7,249.1 1255.7,251.6 1256.6,247.5 1257.6,250.5 1258.5,262.4 1259.5,247.8 1260.4,254.1 1261.4,249.8 1262.3,251.2 1263.3,247.0 1264.2,245.8 1265.2,247.3 1266.1,250.7 1267.1,253.0 1268.0,244.9 1269.0,251.1 1269.9,241.3 1270.9,244.1 1271.8,246.1 1272.8,250.0 1273.7,242.8 1274.7,247.7 1275.6,246.5 1276.6,252.3 1277.5,245.3 1278.5,247.5 1279.4,250.1 1280.4,250.6 1281.3,255.3 1282.3,250.6 1283.2,250.4 1284.2,251.3 1285.1,247.1 1286.1,250.8 1287.0,244.4 1288.0,261.6 1288.9,253.0 1289.9,251.1 1290.8,244.7 1291.8,249.1 1292.7,242.6 1293.7,252.3 1294.6,251.3 1295.6,252.4 1296.5,241.4 1297.5,251.3 1298.4,245.9 1299.4,243.5 1300.3,255.3 1301.3,250.6 1302.2,253.5 1303.2,252.6 1304.1,250.1 1305.1,247.8 1306.0,260.5 1307.0,254.8 1307.9,246.1 1308.9,252.6 1309.8,245.6 1310.8,250.1 1311.7,246.0 1312.7,245.6 1313.6,243.0 1314.6,248.8 1315.5,255.1 1316.5,249.3 1317.4,251.9 1318.4,248.1 1319.3,247.6 1320.3,257.8 1321.2,250.5 1322.2,248.5 1323.1,251.7 1324.1,247.9 1325.0,247.5 1326.0,250.7 1326.9,255.0 1327.9,249.8 1328.8,249.5 1329.8,257.2 1330.7,254.0 1331.7,248.7 1332.6,245.5 1333.6,245.3 1334.5,244.2 1335.5,254.9 1336.4,248.5 1337.4,256.5 1338.3,251.7 1339.3,259.3 1340.2,256.8 1341.2,245.4 1342.1,253.2 1343.1,252.2 1344.0,250.1 1345.0,255.8 1345.9,248.0 1346.9,257.1 1347.8,245.7 1348.8,249.8 1349.7,248.4 1350.7,254.6 1351.6,252.1 1352.6,244.8 1353.5,247.9 1354.5,243.1 1355.4,240.4 1356.4,258.8 1357.3,248.0 1358.3,256.0 1359.2,252.2 1360.2,250.6 1361.1,267.3 1362.1,251.2 1363.0,251.8 1364.0,241.8 1364.9,245.2 1365.9,247.2 1366.8,257.2 1367.8,254.0 1368.7,246.4 1369.7,252.3 1370.6,242.6 1371.6,246.3 1372.5,251.5 1373.5,258.7 1374.4,250.4 1375.4,258.7 1376.3,250.6 1377.3,249.4 1378.2,249.8 1379.2,260.4 1380.1,249.6 1381.1,252.7 1382.0,241.0 1383.0,244.2 1383.9,243.6 1384.9,256.2 1385.8,253.3 1386.8,251.0 1387.7,257.8 1388.7,255.3 1389.6,254.7 1390.6,254.0 1391.5,255.9 1392.5,260.2 1393.4,259.7 1394.4,255.7 1395.3,253.5 1396.3,258.4 1397.2,247.3 1398.2,255.0 1399.2,252.8 1400.1,255.6 1401.1,251.5 1402.0,244.5 1403.0,251.2 1403.9,253.5 1404.9,258.4 1405.8,247.6 1406.8,257.0 1407.7,243.4 1408.7,250.2 1409.6,250.5 1410.6,254.8 1411.5,244.0 1412.5,251.7 1413.4,249.6 1414.4,258.9 1415.3,250.8 1416.3,252.2 1417.2,258.0 1418.2,245.9 1419.1,254.3 1420.1,246.8 1421.0,257.2 1422.0,248.1 1422.9,251.2 1423.9,255.3 1424.8,252.9 1425.8,255.1 1426.7,256.0 1427.7,251.8 1428.6,248.5 1429.6,253.8 1430.5,253.6 1431.5,252.6 1432.4,257.5 1433.4,252.0 1434.3,251.9 1435.3,253.8 1436.2,247.9 1437.2,248.1 1438.1,250.2 1439.1,250.9 1440.0,250.1 1441.0,254.4 1441.9,251.2 1442.9,251.7 1443.8,260.3 1444.8,251.3 1445.7,251.4 1446.7,253.8 1447.6,247.9 1448.6,254.3 1449.5,249.4 1450.5,244.4 1451.4,252.5 1452.4,252.5 1453.3,248.5 1454.3,255.4 1455.2,249.7 1456.2,251.9 1457.1,251.1 1458.1,255.7 1459.0,254.3 1460.0,256.3 1460.9,254.4 1461.9,250.6 1462.8,251.3 1463.8,254.8 1464.7,257.9 1465.7,247.6 1466.6,247.4 1467.6,251.9 1468.5,250.5 1469.5,256.4 1470.4,251.1 1471.4,254.7 1472.3,249.5 1473.3,248.2 1474.2,252.7 1475.2,245.4 1476.1,248.5 1477.1,260.0 1478.0,258.1 1479.0,246.5 1479.9,248.4 1480.9,251.7 1481.8,257.1 1482.8,244.7 1483.7,258.2 1484.7,253.4 1485.6,244.8 1486.6,256.0 1487.5,247.0 1488.5,257.1 1489.4,246.2 1490.4,253.7 1491.3,250.7 1492.3,245.8 1493.2,246.1 1494.2,254.7 1495.1,249.7 1496.1,254.8 1497.0,247.8 1498.0,253.7 1498.9,255.5 1499.9,251.2 1500.8,252.7 1501.8,260.2 1502.7,255.0 1503.7,247.9 1504.6,255.5 1505.6,257.5 1506.5,256.0 1507.5,252.9 1508.4,249.5 1509.4,256.0 1510.3,249.6 1511.3,246.9 1512.2,246.7 1513.2,245.4 1514.1,260.5 1515.1,253.8 1516.0,243.0 1517.0,252.1 1517.9,252.3 1518.9,253.7 1519.8,252.9 1520.8,250.4 1521.7,248.7 1522.7,244.7 1523.6,251.3 1524.6,249.3 1525.5,252.7 1526.5,243.4 1527.4,251.9 1528.4,257.0 1529.3,250.0 1530.3,252.6 1531.2,255.0 1532.2,248.4 1533.1,251.4 1534.1,253.5 1535.0,250.2 1536.0,241.4 1536.9,252.5 1537.9,244.6 1538.8,254.0 1539.8,254.9 1540.7,255.3 1541.7,251.6 1542.6,246.7 1543.6,243.2 1544.5,246.7 1545.5,252.1 1546.4,246.9 1547.4,245.4 1548.3,247.4 1549.3,249.6 1550.2,246.7 1551.2,245.9 1552.1,248.7 1553.1,255.5 1554.0,250.1 1555.0,251.2 1555.9,247.6 1556.9,252.7 1557.8,246.6 1558.8,247.0 1559.7,257.8 1560.7,249.0 1561.6,255.7 1562.6,244.8 1563.5,251.9 1564.5,251.7 1565.4,245.1 1566.4,248.7 1567.3,251.4 1568.3,252.1 1569.2,259.3 1570.2,255.7 1571.1,247.6 1572.1,251.4 1573.0,251.9 1574.0,249.0 1574.9,244.9 1575.9,260.6 1576.8,254.8 1577.8,246.5 1578.7,250.8 1579.7,251.9 1580.6,250.9 1581.6,253.8 1582.5,254.6 1583.5,253.2 1584.4,255.7 1585.4,253.3 1586.3,246.9 1587.3,250.9 1588.2,262.6 1589.2,251.6 1590.1,247.1 1591.1,250.7 1592.0,250.7 1593.0,251.4 1593.9,256.6 1594.9,251.6 1595.8,244.7 1596.8,254.8 1597.7,247.2 1598.7,253.0 1599.6,253.8 1600.6,253.0 1601.5,251.1 1602.5,250.5 1603.4,250.5 1604.4,249.1 1605.3,256.0 1606.3,245.8 1607.2,254.6 1608.2,250.0 1609.1,253.7 1610.1,252.5 1611.0,247.4 1612.0,240.8 1612.9,264.2 1613.9,252.5 1614.8,251.2 1615.8,242.8 1616.7,249.9 1617.7,258.6 1618.6,257.6 1619.6,260.1 1620.5,259.3 1621.5,253.6 1622.4,255.1 1623.4,255.0 1624.3,256.7 1625.3,251.7 1626.2,249.1 1627.2,250.9 1628.1,257.0 1629.1,249.5 1630.0,255.9 1631.0,254.7 1631.9,261.3 1632.9,249.5 1633.8,255.6 1634.8,258.7 1635.7,254.5 1636.7,251.6 1637.6,246.4 1638.6,255.1 1639.5,251.9 1640.5,261.4 1641.4,252.2 1642.4,250.2 1643.3,250.9 1644.3,258.3 1645.2,257.0 1646.2,252.5 1647.1,248.9 1648.1,252.3 1649.0,256.9 1650.0,256.4 1650.9,255.5 1651.9,251.6 1652.8,255.6 1653.8,253.0 1654.7,257.5 1655.7,255.7 1656.6,247.2 1657.6,251.4 1658.5,257.8 1659.5,252.3 1660.4,246.9 1661.4,249.8 1662.3,255.4 1663.3,260.3 1664.2,259.1 1665.2,265.5 1666.1,256.5 1667.1,256.6 1668.0,253.9 1669.0,248.5 1669.9,249.0 1670.9,252.8 1671.8,249.7 1672.8,253.4 1673.7,248.9 1674.7,251.6 1675.6,255.9 1676.6,249.0 1677.5,250.2 1678.5,245.8 1679.4,243.6 1680.4,249.8 1681.3,249.0 1682.3,245.8 1683.2,254.2 1684.2,252.3 1685.1,243.9 1686.1,250.9 1687.0,244.6 1688.0,254.0 1688.9,257.6 1689.9,255.3 1690.8,252.1 1691.8,248.0 1692.7,255.6 1693.7,252.5 1694.6,251.7 1695.6,249.6 1696.5,262.3 1697.5,257.6 1698.4,256.8 1699.4,259.3 1700.3,256.7 1701.3,251.4 1702.2,260.4 1703.2,250.7 1704.1,252.4 1705.1,255.4 1706.0,256.9 1707.0,252.1 1707.9,253.5 1708.9,252.3 1709.8,254.4 1710.8,248.0 1711.7,255.8 1712.7,256.1 1713.6,256.8 1714.6,256.7 1715.5,263.9 1716.5,270.1 1717.4,259.6 1718.4,263.1 1719.3,264.3 1720.3,261.8 1721.2,259.3 1722.2,259.7 1723.1,255.8 1724.1,257.8 1725.0,258.8 1726.0,254.1 1726.9,264.4 1727.9,265.9 1728.8,268.9 1729.8,271.7 1730.7,259.9 1731.7,262.0 1732.6,267.8 1733.6,259.4 1734.5,272.0 1735.5,265.2 1736.4,263.5 1737.4,263.1 1738.3,263.6 1739.3,268.5 1740.2,266.7 1741.2,263.1 1742.1,266.7 1743.1,270.5 1744.0,257.3 1745.0,267.6 1745.9,266.9 1746.9,265.4 1747.8,262.8 1748.8,270.3 1749.7,269.4 1750.7,264.0 1751.6,265.0 1752.6,260.0 1753.5,263.2 1754.5,265.7 1755.4,269.0 1756.4,257.3 1757.3,262.1 1758.3,271.3 1759.2,261.2 1760.2,266.2 1761.1,262.4 1762.1,265.0 1763.0,264.0 1764.0,263.8 1764.9,265.3 1765.9,264.1 1766.8,259.4 1767.8,262.5 1768.7,262.8 1769.7,260.0 1770.6,265.8 1771.6,262.8 1772.5,265.5 1773.5,263.1 1774.4,260.1 1775.4,259.5 1776.3,266.2 1777.3,265.0 1778.2,269.5 1779.2,267.6 1780.1,267.5 1781.1,264.2 1782.0,269.5 1783.0,268.0 1783.9,266.1 1784.9,263.0 1785.8,263.4 1786.8,270.8 1787.7,268.4 1788.7,261.0 1789.6,268.8 1790.6,277.2 1791.5,264.7 1792.5,269.4 1793.4,269.3 1794.4,262.0 1795.3,268.7 1796.3,269.1 1797.2,260.5 1798.2,259.3 1799.1,273.7 1800.1,265.9 1801.0,267.4 1802.0,266.4 1802.9,271.1 1803.9,259.9 1804.8,270.5 1805.8,264.0 1806.7,267.5 1807.7,263.6 1808.6,270.9 1809.6,267.0 1810.5,267.7 1811.5,270.8 1812.4,268.2 1813.4,271.3 1814.3,267.5 1815.3,273.3 1816.2,271.3 1817.2,276.3 1818.1,271.5 1819.1,273.3 1820.0,264.3 1821.0,266.8" fill="none" stroke="#e6e6ea" stroke-width="1.3" stroke-linejoin="round"/>
<line x1="1172.8" x2="1172.8" y1="97.2" y2="320.4" stroke="#d22c1c" stroke-width="1.5"/>
<line x1="1399.2" x2="1399.2" y1="97.2" y2="320.4" stroke="#e8e040" stroke-width="1.3"/>
<text x="961.5" y="104.6" font-size="19.5" text-anchor="end">40.0</text>
<text x="961.5" y="149.2" font-size="19.5" text-anchor="end">20.0</text>
<text x="961.5" y="193.9" font-size="19.5" text-anchor="end">0.0</text>
<text x="961.5" y="238.5" font-size="19.5" text-anchor="end">-20.0</text>
<text x="961.5" y="283.2" font-size="19.5" text-anchor="end">-40.0</text>
<text x="961.5" y="327.8" font-size="19.5" text-anchor="end">-60.0</text>
<text x="1049.8" y="344.8" font-size="19.5" text-anchor="middle">182.8</text>
<text x="1132.2" y="344.8" font-size="19.5" text-anchor="middle">183</text>
<text x="1214.6" y="344.8" font-size="19.5" text-anchor="middle">183.2</text>
<text x="1297.0" y="344.8" font-size="19.5" text-anchor="middle">183.4</text>
<text x="1379.4" y="344.8" font-size="19.5" text-anchor="middle">183.6</text>
<text x="1461.8" y="344.8" font-size="19.5" text-anchor="middle">183.8</text>
<text x="1544.2" y="344.8" font-size="19.5" text-anchor="middle">184</text>
<text x="1626.6" y="344.8" font-size="19.5" text-anchor="middle">184.2</text>
<text x="1709.0" y="344.8" font-size="19.5" text-anchor="middle">184.4</text>
<text x="1791.4" y="344.8" font-size="19.5" text-anchor="middle">184.6</text>
<text x="1399" y="376" font-size="23.3" text-anchor="middle">Frequency (MHz)</text>
<text transform="translate(881.5 209) rotate(-90)" font-size="23.3" text-anchor="middle">Magnitude (dB)</text>
<rect x="1463.5" y="515.0" width="16.1" height="151.0" fill="#444444"/>
<line x1="1360.7" x2="1841.7" y1="515.0" y2="515.0" stroke="#929292" stroke-width="1" shape-rendering="crispEdges"/>
<line x1="1360.7" x2="1841.7" y1="545.2" y2="545.2" stroke="#929292" stroke-width="1" shape-rendering="crispEdges"/>
<line x1="1360.7" x2="1841.7" y1="575.4" y2="575.4" stroke="#929292" stroke-width="1" shape-rendering="crispEdges"/>
<line x1="1360.7" x2="1841.7" y1="605.6" y2="605.6" stroke="#929292" stroke-width="1" shape-rendering="crispEdges"/>
<line x1="1360.7" x2="1841.7" y1="635.8" y2="635.8" stroke="#929292" stroke-width="1" shape-rendering="crispEdges"/>
<line x1="1360.7" x2="1841.7" y1="666.0" y2="666.0" stroke="#929292" stroke-width="1" shape-rendering="crispEdges"/>
<line x1="1383.1" x2="1383.1" y1="515.0" y2="666.0" stroke="#929292" stroke-width="1" shape-rendering="crispEdges"/>
<line x1="1415.3" x2="1415.3" y1="515.0" y2="666.0" stroke="#929292" stroke-width="1" shape-rendering="crispEdges"/>
<line x1="1447.4" x2="1447.4" y1="515.0" y2="666.0" stroke="#929292" stroke-width="1" shape-rendering="crispEdges"/>
<line x1="1479.6" x2="1479.6" y1="515.0" y2="666.0" stroke="#929292" stroke-width="1" shape-rendering="crispEdges"/>
<line x1="1511.8" x2="1511.8" y1="515.0" y2="666.0" stroke="#929292" stroke-width="1" shape-rendering="crispEdges"/>
<line x1="1543.9" x2="1543.9" y1="515.0" y2="666.0" stroke="#929292" stroke-width="1" shape-rendering="crispEdges"/>
<line x1="1576.1" x2="1576.1" y1="515.0" y2="666.0" stroke="#929292" stroke-width="1" shape-rendering="crispEdges"/>
<line x1="1608.3" x2="1608.3" y1="515.0" y2="666.0" stroke="#929292" stroke-width="1" shape-rendering="crispEdges"/>
<line x1="1640.4" x2="1640.4" y1="515.0" y2="666.0" stroke="#929292" stroke-width="1" shape-rendering="crispEdges"/>
<line x1="1672.6" x2="1672.6" y1="515.0" y2="666.0" stroke="#929292" stroke-width="1" shape-rendering="crispEdges"/>
<line x1="1704.8" x2="1704.8" y1="515.0" y2="666.0" stroke="#929292" stroke-width="1" shape-rendering="crispEdges"/>
<line x1="1737.0" x2="1737.0" y1="515.0" y2="666.0" stroke="#929292" stroke-width="1" shape-rendering="crispEdges"/>
<line x1="1769.1" x2="1769.1" y1="515.0" y2="666.0" stroke="#929292" stroke-width="1" shape-rendering="crispEdges"/>
<line x1="1801.3" x2="1801.3" y1="515.0" y2="666.0" stroke="#929292" stroke-width="1" shape-rendering="crispEdges"/>
<line x1="1833.5" x2="1833.5" y1="515.0" y2="666.0" stroke="#929292" stroke-width="1" shape-rendering="crispEdges"/>
<rect x="1360.7" y="515.0" width="481.0" height="151.0" fill="none" stroke="#a8a8a8" stroke-width="2"/>
<line x1="1479.6" x2="1479.6" y1="515.0" y2="666.0" stroke="#e8e040" stroke-width="1" stroke-dasharray="1.2 1.2"/>
<polyline points="1360.7,647.2 1361.4,658.1 1362.0,646.5 1362.7,655.1 1363.3,647.2 1364.0,646.7 1364.7,665.5 1365.3,653.3 1366.0,665.2 1366.6,653.3 1367.3,662.1 1368.0,656.3 1368.6,663.0 1369.3,656.9 1370.0,645.8 1370.6,654.3 1371.3,650.2 1371.9,657.0 1372.6,661.2 1373.3,646.5 1373.9,654.9 1374.6,658.0 1375.2,659.3 1375.9,650.0 1376.6,660.2 1377.2,655.5 1377.9,656.6 1378.5,654.7 1379.2,655.1 1379.9,658.4 1380.5,655.7 1381.2,652.1 1381.8,665.5 1382.5,660.0 1383.2,651.3 1383.8,656.9 1384.5,653.4 1385.1,652.8 1385.8,653.3 1386.5,665.5 1387.1,659.0 1387.8,652.4 1388.5,653.5 1389.1,653.1 1389.8,654.9 1390.4,665.5 1391.1,658.1 1391.8,656.8 1392.4,650.2 1393.1,651.6 1393.7,646.7 1394.4,656.4 1395.1,663.9 1395.7,665.5 1396.4,659.6 1397.0,665.5 1397.7,665.5 1398.4,651.2 1399.0,657.0 1399.7,656.7 1400.3,654.0 1401.0,650.5 1401.7,654.4 1402.3,657.5 1403.0,643.1 1403.6,644.0 1404.3,636.0 1405.0,636.0 1405.6,644.0 1406.3,657.1 1407.0,659.9 1407.6,660.2 1408.3,649.7 1408.9,646.8 1409.6,656.8 1410.3,655.8 1410.9,656.9 1411.6,655.2 1412.2,654.8 1412.9,644.7 1413.6,654.3 1414.2,640.9 1414.9,659.6 1415.5,641.0 1416.2,665.5 1416.9,647.5 1417.5,661.3 1418.2,648.8 1418.8,647.4 1419.5,650.9 1420.2,665.5 1420.8,654.9 1421.5,654.7 1422.1,646.6 1422.8,659.9 1423.5,661.2 1424.1,656.8 1424.8,665.5 1425.5,657.4 1426.1,653.0 1426.8,656.7 1427.4,659.5 1428.1,642.1 1428.8,660.6 1429.4,657.8 1430.1,662.3 1430.7,660.4 1431.4,650.9 1432.1,660.7 1432.7,661.5 1433.4,651.5 1434.0,639.3 1434.7,650.3 1435.4,657.2 1436.0,649.9 1436.7,649.9 1437.3,662.6 1438.0,654.7 1438.7,665.5 1439.3,658.3 1440.0,655.8 1440.6,654.2 1441.3,665.5 1442.0,657.5 1442.6,664.7 1443.3,658.3 1444.0,648.6 1444.6,645.3 1445.3,657.9 1445.9,658.6 1446.6,654.5 1447.3,651.3 1447.9,652.8 1448.6,647.7 1449.2,646.0 1449.9,663.0 1450.6,665.4 1451.2,651.0 1451.9,645.0 1452.5,644.9 1453.2,664.3 1453.9,647.2 1454.5,652.8 1455.2,651.8 1455.8,648.7 1456.5,647.1 1457.2,665.5 1457.8,653.2 1458.5,649.1 1459.1,665.5 1459.8,661.9 1460.5,659.1 1461.1,653.9 1461.8,648.4 1462.5,658.4 1463.1,660.9 1463.8,660.4 1464.4,662.1 1465.1,649.4 1465.8,640.3 1466.4,659.6 1467.1,658.0 1467.7,654.2 1468.4,645.9 1469.1,650.0 1469.7,653.3 1470.4,659.3 1471.0,634.5 1471.7,617.0 1472.4,617.0 1473.0,634.5 1473.7,655.3 1474.3,645.6 1475.0,650.0 1475.7,648.0 1476.3,646.0 1477.0,644.0 1477.6,642.1 1478.3,625.0 1479.0,598.0 1479.6,598.0 1480.3,625.0 1481.0,643.9 1481.6,645.8 1482.3,647.8 1482.9,649.8 1483.6,650.0 1484.3,650.0 1484.9,650.0 1485.6,650.0 1486.2,649.4 1486.9,658.1 1487.6,658.0 1488.2,659.4 1488.9,642.5 1489.5,653.0 1490.2,656.7 1490.9,665.5 1491.5,653.1 1492.2,660.9 1492.8,665.5 1493.5,655.4 1494.2,654.7 1494.8,650.3 1495.5,644.9 1496.1,661.2 1496.8,655.0 1497.5,654.3 1498.1,665.5 1498.8,646.1 1499.5,655.9 1500.1,647.5 1500.8,653.4 1501.4,656.9 1502.1,652.0 1502.8,653.9 1503.4,665.5 1504.1,638.0 1504.7,665.5 1505.4,661.8 1506.1,652.0 1506.7,662.3 1507.4,654.6 1508.0,654.8 1508.7,658.6 1509.4,662.3 1510.0,656.9 1510.7,651.3 1511.3,658.9 1512.0,645.4 1512.7,647.9 1513.3,660.7 1514.0,657.3 1514.6,650.6 1515.3,657.7 1516.0,643.2 1516.6,637.5 1517.3,623.0 1518.0,623.0 1518.6,637.5 1519.3,661.9 1519.9,655.9 1520.6,657.3 1521.3,665.5 1521.9,650.8 1522.6,648.1 1523.2,665.3 1523.9,655.5 1524.6,656.9 1525.2,655.3 1525.9,653.5 1526.5,662.4 1527.2,659.7 1527.9,658.5 1528.5,637.7 1529.2,654.6 1529.8,642.1 1530.5,646.1 1531.2,665.5 1531.8,659.9 1532.5,659.4 1533.1,653.9 1533.8,648.2 1534.5,659.5 1535.1,653.3 1535.8,665.2 1536.5,652.1 1537.1,648.5 1537.8,655.7 1538.4,648.7 1539.1,665.5 1539.8,653.7 1540.4,648.5 1541.1,658.8 1541.7,639.7 1542.4,637.0 1543.1,622.0 1543.7,622.0 1544.4,637.0 1545.0,645.5 1545.7,660.7 1546.4,660.7 1547.0,654.8 1547.7,664.5 1548.3,632.3 1549.0,651.0 1549.7,655.7 1550.3,658.8 1551.0,651.0 1551.6,651.0 1552.3,647.1 1553.0,651.9 1553.6,657.4 1554.3,660.3 1555.0,654.5 1555.6,654.2 1556.3,653.2 1556.9,652.5 1557.6,651.7 1558.3,647.8 1558.9,650.9 1559.6,656.1 1560.2,656.9 1560.9,653.2 1561.6,647.2 1562.2,647.3 1562.9,654.9 1563.5,665.5 1564.2,661.5 1564.9,655.1 1565.5,661.8 1566.2,652.1 1566.8,657.4 1567.5,653.6 1568.2,645.2 1568.8,656.5 1569.5,659.7 1570.1,657.7 1570.8,651.9 1571.5,665.5 1572.1,659.5 1572.8,660.5 1573.5,663.4 1574.1,662.7 1574.8,632.0 1575.4,612.0 1576.1,632.0 1576.8,661.1 1577.4,629.0 1578.1,606.0 1578.7,606.0 1579.4,629.0 1580.1,644.3 1580.7,630.0 1581.4,608.0 1582.0,630.0 1582.7,655.2 1583.4,640.0 1584.0,628.0 1584.7,640.0 1585.3,663.4 1586.0,658.9 1586.7,665.2 1587.3,661.0 1588.0,653.0 1588.6,652.7 1589.3,655.6 1590.0,660.3 1590.6,656.1 1591.3,648.7 1592.0,651.8 1592.6,648.5 1593.3,651.6 1593.9,640.9 1594.6,648.8 1595.3,644.0 1595.9,665.5 1596.6,644.5 1597.2,652.5 1597.9,643.6 1598.6,662.3 1599.2,664.4 1599.9,657.8 1600.5,659.5 1601.2,657.8 1601.9,655.1 1602.5,648.5 1603.2,641.9 1603.8,641.7 1604.5,648.0 1605.2,656.5 1605.8,660.4 1606.5,656.2 1607.1,659.8 1607.8,655.8 1608.5,649.6 1609.1,650.3 1609.8,656.2 1610.5,650.8 1611.1,662.7 1611.8,655.9 1612.4,657.6 1613.1,649.3 1613.8,661.0 1614.4,665.4 1615.1,650.6 1615.7,647.1 1616.4,664.3 1617.1,657.7 1617.7,658.8 1618.4,661.1 1619.0,649.5 1619.7,654.6 1620.4,663.9 1621.0,665.5 1621.7,655.6 1622.3,660.2 1623.0,658.2 1623.7,647.9 1624.3,656.5 1625.0,659.1 1625.6,651.0 1626.3,658.1 1627.0,654.0 1627.6,647.5 1628.3,653.3 1629.0,650.5 1629.6,660.9 1630.3,654.1 1630.9,649.2 1631.6,649.5 1632.3,660.2 1632.9,654.9 1633.6,654.6 1634.2,656.2 1634.9,655.3 1635.6,656.9 1636.2,651.1 1636.9,649.5 1637.5,661.5 1638.2,647.6 1638.9,661.8 1639.5,654.8 1640.2,649.5 1640.8,654.5 1641.5,649.5 1642.2,657.4 1642.8,657.8 1643.5,658.4 1644.1,661.7 1644.8,659.6 1645.5,658.1 1646.1,653.3 1646.8,657.0 1647.5,645.7 1648.1,654.8 1648.8,650.9 1649.4,655.9 1650.1,649.5 1650.8,637.2 1651.4,654.5 1652.1,654.7 1652.7,653.6 1653.4,652.9 1654.1,658.5 1654.7,643.2 1655.4,657.0 1656.0,640.9 1656.7,651.7 1657.4,655.5 1658.0,644.8 1658.7,654.4 1659.3,664.5 1660.0,652.3 1660.7,655.8 1661.3,664.4 1662.0,661.3 1662.6,652.7 1663.3,659.1 1664.0,654.9 1664.6,647.4 1665.3,652.3 1666.0,665.5 1666.6,654.9 1667.3,658.0 1667.9,650.5 1668.6,644.0 1669.3,649.8 1669.9,657.0 1670.6,656.3 1671.2,664.8 1671.9,651.8 1672.6,655.0 1673.2,648.9 1673.9,660.0 1674.5,656.0 1675.2,648.8 1675.9,661.3 1676.5,654.7 1677.2,664.3 1677.8,665.4 1678.5,657.9 1679.2,649.3 1679.8,651.0 1680.5,651.2 1681.1,644.9 1681.8,665.5 1682.5,655.1 1683.1,647.5 1683.8,659.0 1684.5,648.4 1685.1,654.4 1685.8,665.5 1686.4,659.2 1687.1,646.2 1687.8,649.0 1688.4,658.7 1689.1,657.0 1689.7,653.7 1690.4,656.8 1691.1,655.9 1691.7,661.3 1692.4,665.5 1693.0,661.7 1693.7,660.3 1694.4,650.2 1695.0,655.3 1695.7,646.7 1696.3,656.4 1697.0,652.1 1697.7,660.6 1698.3,655.5 1699.0,665.5 1699.6,661.0 1700.3,649.6 1701.0,662.6 1701.6,652.7 1702.3,663.0 1703.0,650.9 1703.6,656.3 1704.3,659.1 1704.9,652.8 1705.6,651.4 1706.3,656.2 1706.9,658.4 1707.6,664.7 1708.2,658.6 1708.9,656.5 1709.6,665.5 1710.2,647.5 1710.9,650.2 1711.5,638.4 1712.2,651.7 1712.9,665.5 1713.5,656.4 1714.2,665.5 1714.8,648.1 1715.5,643.5 1716.2,650.6 1716.8,665.5 1717.5,653.6 1718.1,653.2 1718.8,641.9 1719.5,654.0 1720.1,655.4 1720.8,665.5 1721.5,655.7 1722.1,650.4 1722.8,661.1 1723.4,664.7 1724.1,655.5 1724.8,648.8 1725.4,659.2 1726.1,663.3 1726.7,649.0 1727.4,645.5 1728.1,661.3 1728.7,647.0 1729.4,660.9 1730.0,665.5 1730.7,656.2 1731.4,662.8 1732.0,656.8 1732.7,650.7 1733.3,643.1 1734.0,651.6 1734.7,643.1 1735.3,649.4 1736.0,663.4 1736.6,656.4 1737.3,646.3 1738.0,665.5 1738.6,643.9 1739.3,652.3 1740.0,654.8 1740.6,657.4 1741.3,650.2 1741.9,654.7 1742.6,657.3 1743.3,651.7 1743.9,650.8 1744.6,639.9 1745.2,652.4 1745.9,654.7 1746.6,656.9 1747.2,635.6 1747.9,655.4 1748.5,653.6 1749.2,659.8 1749.9,660.8 1750.5,657.1 1751.2,656.3 1751.8,655.0 1752.5,650.6 1753.2,655.9 1753.8,663.1 1754.5,645.5 1755.1,665.5 1755.8,654.1 1756.5,653.6 1757.1,661.5 1757.8,648.7 1758.5,645.3 1759.1,663.7 1759.8,656.9 1760.4,661.6 1761.1,657.9 1761.8,659.4 1762.4,652.8 1763.1,662.4 1763.7,658.5 1764.4,645.8 1765.1,650.3 1765.7,659.6 1766.4,643.4 1767.0,665.1 1767.7,653.0 1768.4,658.5 1769.0,656.6 1769.7,641.8 1770.3,653.4 1771.0,657.4 1771.7,653.0 1772.3,647.3 1773.0,659.3 1773.6,653.7 1774.3,647.9 1775.0,659.4 1775.6,654.8 1776.3,665.5 1777.0,657.0 1777.6,660.8 1778.3,645.2 1778.9,664.4 1779.6,652.6 1780.3,659.4 1780.9,644.2 1781.6,650.5 1782.2,648.2 1782.9,642.1 1783.6,647.0 1784.2,640.8 1784.9,653.5 1785.5,653.3 1786.2,661.7 1786.9,658.0 1787.5,654.8 1788.2,659.4 1788.8,660.5 1789.5,664.2 1790.2,651.6 1790.8,661.5 1791.5,652.9 1792.1,643.7 1792.8,653.9 1793.5,652.9 1794.1,648.9 1794.8,651.6 1795.5,661.7 1796.1,656.4 1796.8,654.7 1797.4,665.5 1798.1,642.8 1798.8,644.3 1799.4,665.5 1800.1,651.4 1800.7,649.5 1801.4,659.2 1802.1,660.4 1802.7,649.7 1803.4,649.7 1804.0,655.2 1804.7,658.1 1805.4,659.1 1806.0,655.5 1806.7,655.8 1807.3,656.0 1808.0,663.4 1808.7,649.3 1809.3,649.4 1810.0,652.4 1810.6,660.9 1811.3,653.3 1812.0,645.3 1812.6,657.3 1813.3,651.9 1814.0,649.5 1814.6,653.0 1815.3,650.6 1815.9,654.4 1816.6,659.1 1817.3,662.2 1817.9,664.0 1818.6,661.9 1819.2,656.6 1819.9,647.8 1820.6,657.0 1821.2,653.9 1821.9,657.5 1822.5,649.0 1823.2,654.2 1823.9,649.6 1824.5,662.5 1825.2,644.8 1825.8,653.0 1826.5,646.3 1827.2,660.2 1827.8,660.2 1828.5,656.0 1829.1,656.5 1829.8,659.1 1830.5,654.8 1831.1,650.9 1831.8,650.5 1832.5,665.5 1833.1,656.2 1833.8,653.0 1834.4,634.0 1835.1,663.9 1835.8,656.9 1836.4,651.1 1837.1,665.5 1837.7,648.2 1838.4,661.4 1839.1,647.5 1839.7,662.2 1840.4,658.0 1841.0,658.9 1841.7,655.4" fill="none" stroke="#f6f6f6" stroke-width="1.3" stroke-linejoin="round"/>
<line x1="1404.7" x2="1404.7" y1="625.7" y2="647.7" stroke="#f0f0f0" stroke-width="1.2"/>
<circle cx="1404.7" cy="625.7" r="6.2" fill="#1e9be0"/>
<line x1="1479.3" x2="1479.3" y1="592.7" y2="614.7" stroke="#f0f0f0" stroke-width="1.2"/>
<circle cx="1479.3" cy="592.7" r="6.2" fill="#ffee22"/>
<line x1="1543.3" x2="1543.3" y1="615.7" y2="637.7" stroke="#f0f0f0" stroke-width="1.2"/>
<circle cx="1543.3" cy="615.7" r="6.2" fill="#8a30e0"/>
<line x1="1581.3" x2="1581.3" y1="602.3" y2="624.3" stroke="#f0f0f0" stroke-width="1.2"/>
<circle cx="1581.3" cy="602.3" r="6.2" fill="#e01818"/>
<text x="1350.5" y="522.4" font-size="19.5" text-anchor="end">-10.0</text>
<text x="1350.5" y="552.6" font-size="19.5" text-anchor="end">-20.0</text>
<text x="1350.5" y="582.8" font-size="19.5" text-anchor="end">-30.0</text>
<text x="1350.5" y="613.0" font-size="19.5" text-anchor="end">-40.0</text>
<text x="1350.5" y="643.2" font-size="19.5" text-anchor="end">-50.0</text>
<text x="1350.5" y="673.4" font-size="19.5" text-anchor="end">-60.0</text>
<text x="1383.1" y="684.3" font-size="14.5" text-anchor="middle">-60</text>
<text x="1415.3" y="706.0" font-size="14.5" text-anchor="middle">-40</text>
<text x="1447.4" y="684.3" font-size="14.5" text-anchor="middle">-20</text>
<text x="1479.6" y="706.0" font-size="14.5" text-anchor="middle">0</text>
<text x="1511.8" y="684.3" font-size="14.5" text-anchor="middle">20</text>
<text x="1543.9" y="706.0" font-size="14.5" text-anchor="middle">40</text>
<text x="1576.1" y="684.3" font-size="14.5" text-anchor="middle">60</text>
<text x="1608.3" y="706.0" font-size="14.5" text-anchor="middle">80</text>
<text x="1640.4" y="684.3" font-size="14.5" text-anchor="middle">100</text>
<text x="1672.6" y="706.0" font-size="14.5" text-anchor="middle">120</text>
<text x="1704.8" y="684.3" font-size="14.5" text-anchor="middle">140</text>
<text x="1737.0" y="706.0" font-size="14.5" text-anchor="middle">160</text>
<text x="1769.1" y="684.3" font-size="14.5" text-anchor="middle">180</text>
<text x="1801.3" y="706.0" font-size="14.5" text-anchor="middle">200</text>
<text x="1833.5" y="684.3" font-size="14.5" text-anchor="middle">220</text>
<text x="1600.9" y="733.3" font-size="20" text-anchor="middle">Distance Difference (km)</text>
<text transform="translate(1280 591) rotate(-90)" font-size="19.8" text-anchor="middle">Magnitude (dB)</text>
<line x1="1103.7" x2="1834.6" y1="807.0" y2="807.0" stroke="#929292" stroke-width="1" shape-rendering="crispEdges"/>
<text x="1090.5" y="814.4" font-size="19.5" text-anchor="end">1.0</text>
<line x1="1103.7" x2="1834.6" y1="840.5" y2="840.5" stroke="#929292" stroke-width="1" shape-rendering="crispEdges"/>
<text x="1090.5" y="847.9" font-size="19.5" text-anchor="end">0.8</text>
<line x1="1103.7" x2="1834.6" y1="873.9" y2="873.9" stroke="#929292" stroke-width="1" shape-rendering="crispEdges"/>
<text x="1090.5" y="881.3" font-size="19.5" text-anchor="end">0.6</text>
<line x1="1103.7" x2="1834.6" y1="907.4" y2="907.4" stroke="#929292" stroke-width="1" shape-rendering="crispEdges"/>
<text x="1090.5" y="914.8" font-size="19.5" text-anchor="end">0.4</text>
<line x1="1103.7" x2="1834.6" y1="940.8" y2="940.8" stroke="#929292" stroke-width="1" shape-rendering="crispEdges"/>
<text x="1090.5" y="948.2" font-size="19.5" text-anchor="end">0.2</text>
<line x1="1103.7" x2="1834.6" y1="974.3" y2="974.3" stroke="#929292" stroke-width="1" shape-rendering="crispEdges"/>
<text x="1090.5" y="981.7" font-size="19.5" text-anchor="end">0.0</text>
<line x1="1148.3" x2="1148.3" y1="807.0" y2="974.3" stroke="#929292" stroke-width="1" shape-rendering="crispEdges"/>
<line x1="1219.7" x2="1219.7" y1="807.0" y2="974.3" stroke="#929292" stroke-width="1" shape-rendering="crispEdges"/>
<line x1="1291.0" x2="1291.0" y1="807.0" y2="974.3" stroke="#929292" stroke-width="1" shape-rendering="crispEdges"/>
<line x1="1362.4" x2="1362.4" y1="807.0" y2="974.3" stroke="#929292" stroke-width="1" shape-rendering="crispEdges"/>
<line x1="1433.8" x2="1433.8" y1="807.0" y2="974.3" stroke="#929292" stroke-width="1" shape-rendering="crispEdges"/>
<line x1="1505.2" x2="1505.2" y1="807.0" y2="974.3" stroke="#929292" stroke-width="1" shape-rendering="crispEdges"/>
<line x1="1576.5" x2="1576.5" y1="807.0" y2="974.3" stroke="#929292" stroke-width="1" shape-rendering="crispEdges"/>
<line x1="1647.9" x2="1647.9" y1="807.0" y2="974.3" stroke="#929292" stroke-width="1" shape-rendering="crispEdges"/>
<line x1="1719.3" x2="1719.3" y1="807.0" y2="974.3" stroke="#929292" stroke-width="1" shape-rendering="crispEdges"/>
<line x1="1790.6" x2="1790.6" y1="807.0" y2="974.3" stroke="#929292" stroke-width="1" shape-rendering="crispEdges"/>
<rect x="1103.7" y="807.0" width="730.8999999999999" height="167.29999999999995" fill="none" stroke="#a8a8a8" stroke-width="2"/>
<line x1="1195.5" x2="1195.5" y1="809.0" y2="974.3" stroke="#e6e63c" stroke-width="2" stroke-dasharray="2 2"/>
<line x1="1332.5" x2="1332.5" y1="809.0" y2="974.3" stroke="#e6e63c" stroke-width="2" stroke-dasharray="2 2"/>
<line x1="1469.4" x2="1469.4" y1="809.0" y2="974.3" stroke="#e6e63c" stroke-width="2" stroke-dasharray="2 2"/>
<line x1="1606.3" x2="1606.3" y1="809.0" y2="974.3" stroke="#e6e63c" stroke-width="2" stroke-dasharray="2 2"/>
<line x1="1743.3" x2="1743.3" y1="809.0" y2="974.3" stroke="#e6e63c" stroke-width="2" stroke-dasharray="2 2"/>
<text transform="translate(1041.2 890.5) rotate(-90)" font-size="19.5" text-anchor="middle">Magnitude</text>
</svg>
</body></html>
